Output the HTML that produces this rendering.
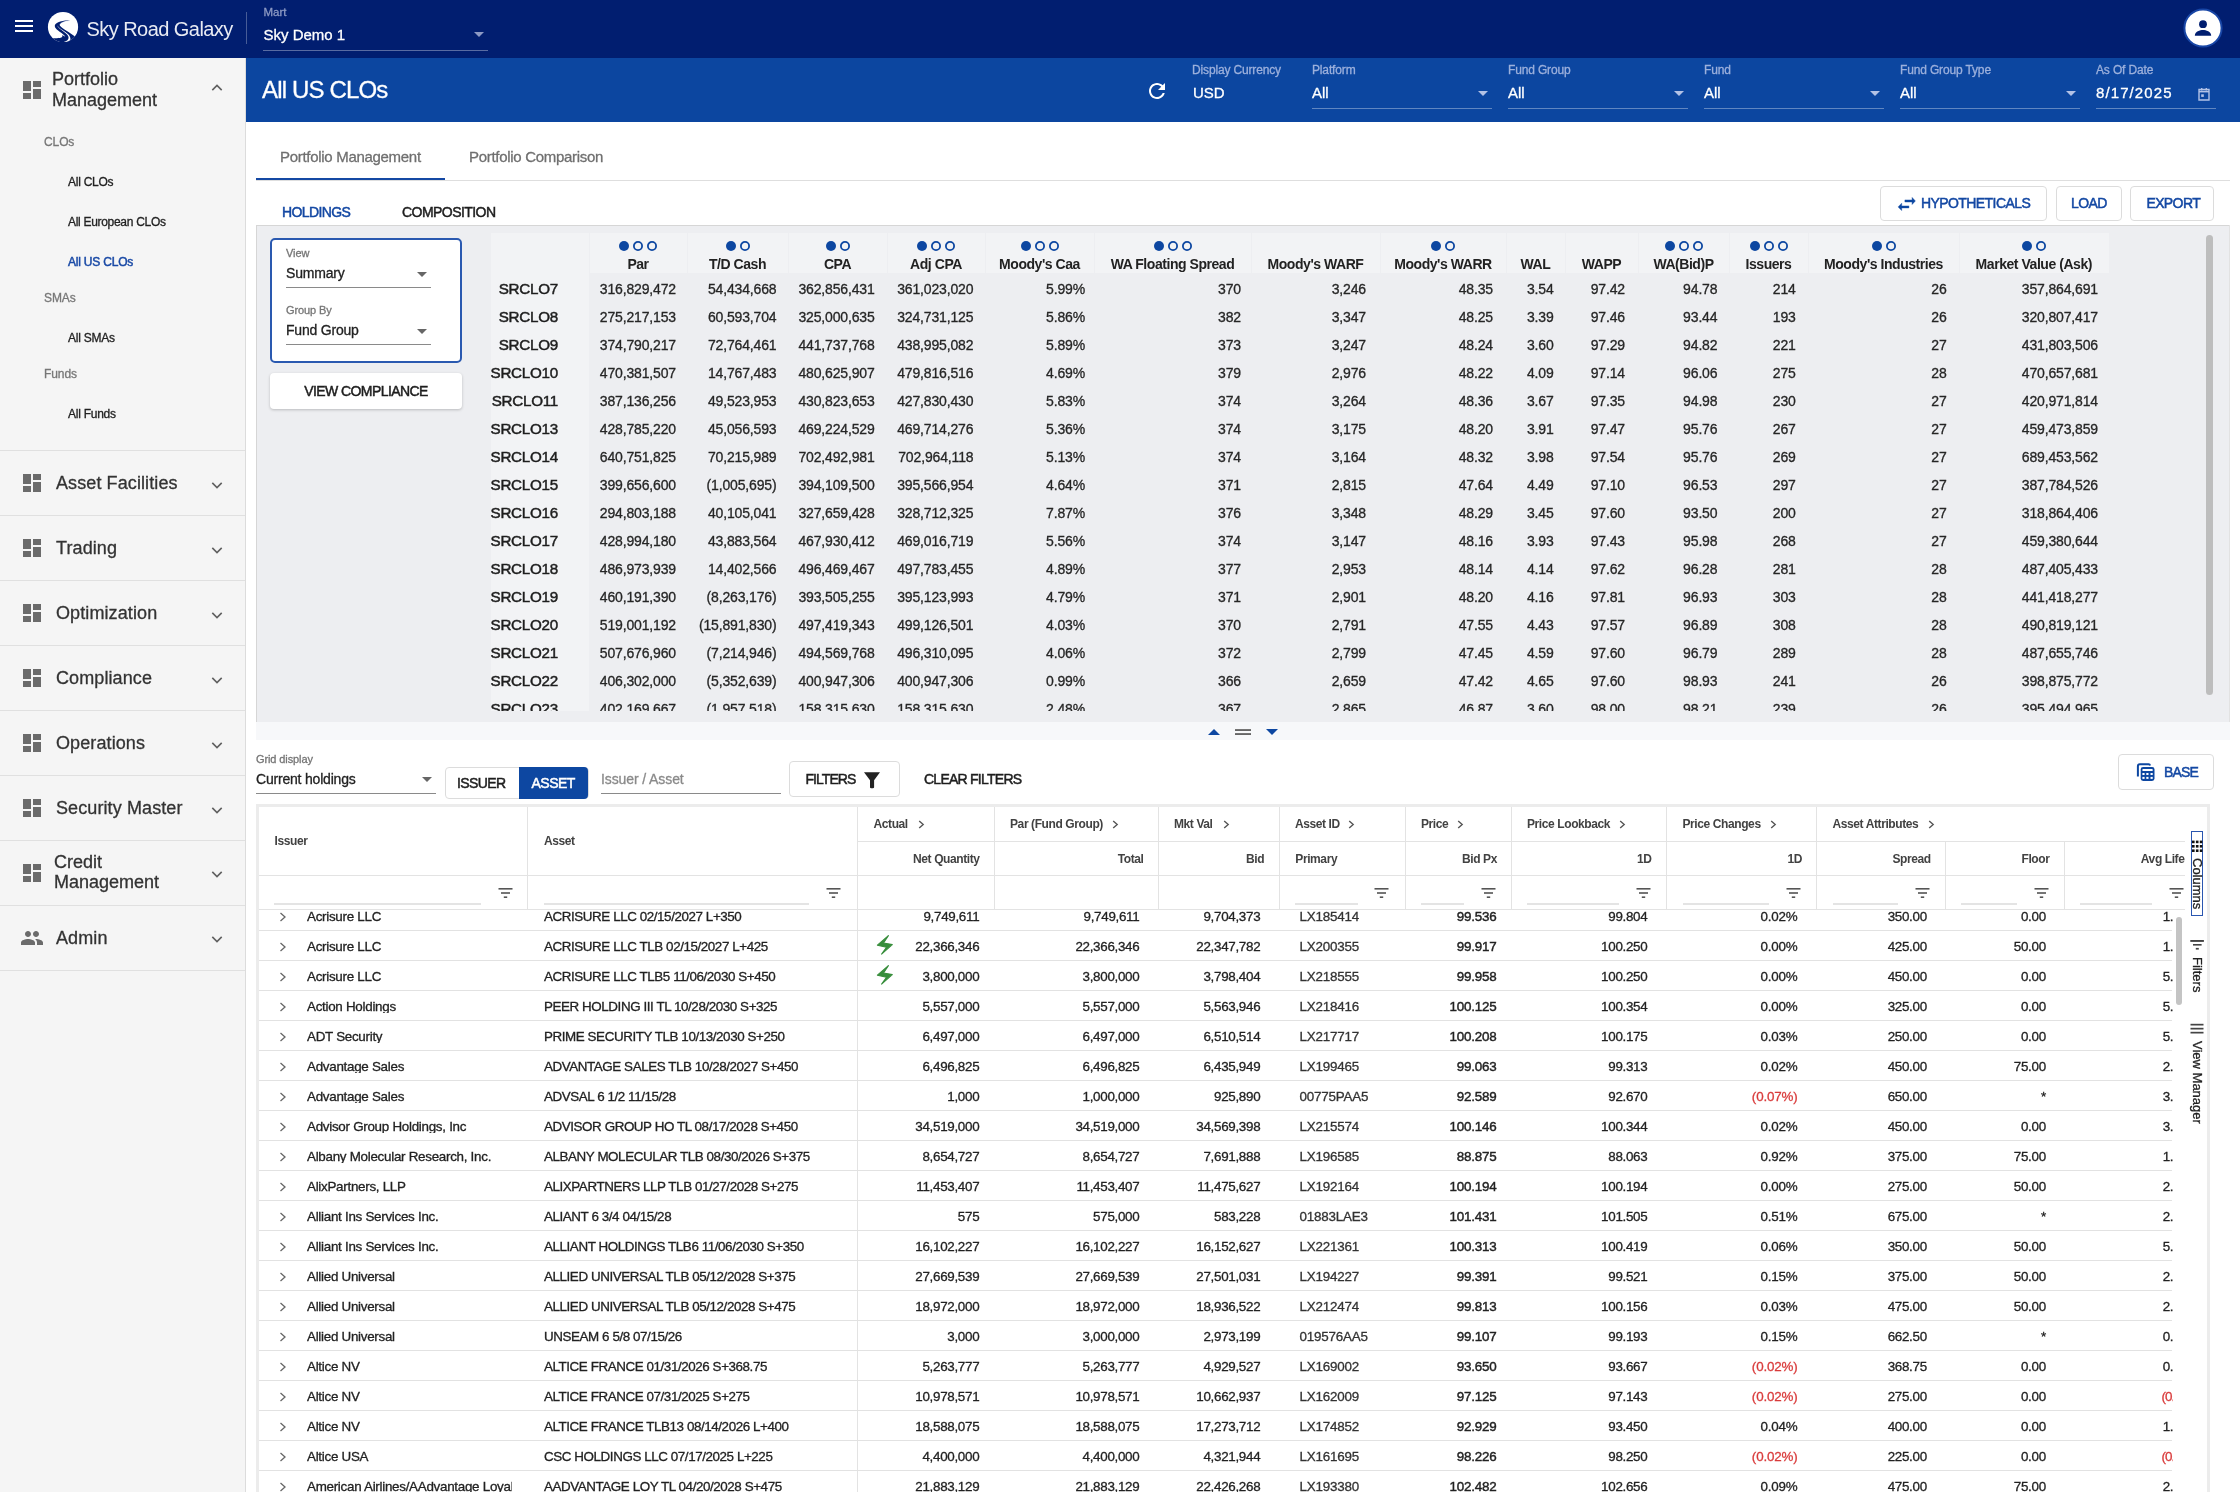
<!DOCTYPE html><html><head><meta charset="utf-8"><title>Sky Road Galaxy</title><style>
html,body{margin:0;padding:0;width:2240px;height:1492px;overflow:hidden;background:#fff;font-family:"Liberation Sans",sans-serif;}
#pg{position:absolute;left:0;top:0;width:2240px;height:1492px;overflow:hidden;will-change:transform;}
.t{position:absolute;white-space:nowrap;line-height:1;-webkit-text-stroke:0.3px currentColor;}
.b{-webkit-text-stroke:0;}
.r{position:absolute;}
.ic{position:absolute;}
.clip{position:absolute;overflow:hidden;}
.md{-webkit-text-stroke:0.48px currentColor;}
.m2{-webkit-text-stroke:0.42px currentColor;}
</style></head><body><div id="pg">
<div class="r" style="left:0px;top:0px;width:2240px;height:58px;background:#011e70;"></div><div class="r" style="left:15px;top:20px;width:18px;height:2px;background:#fff;"></div><div class="r" style="left:15px;top:25px;width:18px;height:2px;background:#fff;"></div><div class="r" style="left:15px;top:30px;width:18px;height:2px;background:#fff;"></div><svg class="ic" style="left:47px;top:11px" width="32" height="32" viewBox="0 0 32 32">
<defs><clipPath id="lc"><circle cx="16" cy="16" r="15.1"/></clipPath></defs>
<g clip-path="url(#lc)">
<rect x="0" y="0" width="32" height="32" fill="#fff"/>
<path d="M0 26.6 C4 27.3 10.5 27.6 13.6 26.8 C15.5 26.2 15.8 25 15 24 L33 33 L0 33 Z" fill="#011e70"/>
<path d="M23 9.2 C17 9.3 8.4 10.8 7.8 14.6 C7.4 17.8 13.5 20.6 17.2 24.2 C19.6 26.6 18 29.6 11.5 31 L20 33 L33 33 L33 24.6 L28 25.6 C22.5 21.2 15.8 18.2 13 14.8 C11.8 12.8 15.5 10.2 23 9.2 Z" fill="#011e70"/>
<path d="M10.4 14.2 C10.6 17.2 17.2 20.2 20.3 23.8 C23.2 27.4 21.3 30.8 13.2 31.6 L20 31.8 C23.8 30.6 24.4 27.2 22 24 C19 20.4 11.6 17.6 10.4 14.2 Z" fill="#fff"/>
<path d="M12.2 13.6 C14 11.2 18 10 22.6 9.6" stroke="#c9d0e6" stroke-width="0.6" fill="none" opacity="0.6"/>
</g></svg><div class="t b" style="top:18.7px;font-size:20px;color:#e8ebf3;letter-spacing:-0.55px;left:86.5px;">Sky Road Galaxy</div><div class="r" style="left:246px;top:12px;width:1px;height:32px;background:rgba(255,255,255,0.28);"></div><div class="t" style="top:7.1px;font-size:11.5px;color:#8d9ac4;left:263.5px;">Mart</div><div class="t" style="top:27.3px;font-size:15px;color:#fff;left:263.5px;">Sky Demo 1</div><div class="r" style="left:263px;top:50px;width:225px;height:1px;background:rgba(255,255,255,0.35);"></div><svg class="ic" style="left:473px;top:31px" width="12" height="7" viewBox="0 0 12 7"><path d="M1 1h10L6 6z" fill="#8d9ac4"/></svg><svg class="ic" style="left:2183px;top:8px" width="40" height="40" viewBox="0 0 40 40">
<circle cx="20" cy="20" r="18.6" fill="#fff" stroke="#1846a6" stroke-width="2"/>
<circle cx="20" cy="16.2" r="3.9" fill="#011e70"/>
<path d="M11.8 27.8 C11.8 23.2 17 21.9 20 21.9 C23 21.9 28.2 23.2 28.2 27.8 Z" fill="#011e70"/>
</svg><div class="r" style="left:0px;top:58px;width:246px;height:1434px;background:#f5f5f5;"></div><div class="r" style="left:245px;top:58px;width:1px;height:1434px;background:#dcdcdc;"></div><svg class="ic" style="left:20px;top:78px" width="24" height="24" viewBox="0 0 24 24"><path d="M3 13h8V3H3v10zm0 8h8v-6H3v6zm10 0h8V11h-8v10zm0-18v6h8V3h-8z" fill="#6b6b6b"/></svg><div class="t" style="top:69.8px;font-size:18px;color:#333;left:52.0px;">Portfolio</div><div class="t" style="top:90.8px;font-size:18px;color:#333;left:52.0px;">Management</div><svg class="ic" style="left:210px;top:82.5px" width="14" height="9" viewBox="0 0 14 9"><path d="M2.3 7.1 L7 2.4 L11.7 7.1" stroke="#606060" stroke-width="1.6" fill="none"/></svg><div class="t" style="top:135.8px;font-size:12px;color:#777;letter-spacing:-0.1px;left:44.0px;">CLOs</div><div class="t" style="top:175.8px;font-size:12px;color:#222;letter-spacing:-0.25px;left:68.0px;">All CLOs</div><div class="t" style="top:215.8px;font-size:12px;color:#222;letter-spacing:-0.3px;left:68.0px;">All European CLOs</div><div class="t md" style="top:255.8px;font-size:12px;color:#1a4aa6;letter-spacing:-0.2px;left:68.0px;">All US CLOs</div><div class="t" style="top:291.8px;font-size:12px;color:#777;letter-spacing:-0.1px;left:44.0px;">SMAs</div><div class="t" style="top:331.8px;font-size:12px;color:#222;letter-spacing:-0.25px;left:68.0px;">All SMAs</div><div class="t" style="top:367.8px;font-size:12px;color:#777;letter-spacing:-0.1px;left:44.0px;">Funds</div><div class="t" style="top:407.8px;font-size:12px;color:#222;letter-spacing:-0.25px;left:68.0px;">All Funds</div><div class="r" style="left:0px;top:450px;width:245px;height:1px;background:#e0e0e0;"></div><svg class="ic" style="left:20px;top:471px" width="24" height="24" viewBox="0 0 24 24"><path d="M3 13h8V3H3v10zm0 8h8v-6H3v6zm10 0h8V11h-8v10zm0-18v6h8V3h-8z" fill="#6b6b6b"/></svg><div class="t" style="top:473.8px;font-size:18px;color:#333;letter-spacing:0.1px;left:56.0px;">Asset Facilities</div><svg class="ic" style="left:210px;top:481px" width="14" height="9" viewBox="0 0 14 9"><path d="M2.3 1.9 L7 6.6 L11.7 1.9" stroke="#606060" stroke-width="1.6" fill="none"/></svg><div class="r" style="left:0px;top:515px;width:245px;height:1px;background:#e0e0e0;"></div><svg class="ic" style="left:20px;top:536px" width="24" height="24" viewBox="0 0 24 24"><path d="M3 13h8V3H3v10zm0 8h8v-6H3v6zm10 0h8V11h-8v10zm0-18v6h8V3h-8z" fill="#6b6b6b"/></svg><div class="t" style="top:538.8px;font-size:18px;color:#333;letter-spacing:0.1px;left:56.0px;">Trading</div><svg class="ic" style="left:210px;top:546px" width="14" height="9" viewBox="0 0 14 9"><path d="M2.3 1.9 L7 6.6 L11.7 1.9" stroke="#606060" stroke-width="1.6" fill="none"/></svg><div class="r" style="left:0px;top:580px;width:245px;height:1px;background:#e0e0e0;"></div><svg class="ic" style="left:20px;top:601px" width="24" height="24" viewBox="0 0 24 24"><path d="M3 13h8V3H3v10zm0 8h8v-6H3v6zm10 0h8V11h-8v10zm0-18v6h8V3h-8z" fill="#6b6b6b"/></svg><div class="t" style="top:603.8px;font-size:18px;color:#333;letter-spacing:0.1px;left:56.0px;">Optimization</div><svg class="ic" style="left:210px;top:611px" width="14" height="9" viewBox="0 0 14 9"><path d="M2.3 1.9 L7 6.6 L11.7 1.9" stroke="#606060" stroke-width="1.6" fill="none"/></svg><div class="r" style="left:0px;top:645px;width:245px;height:1px;background:#e0e0e0;"></div><svg class="ic" style="left:20px;top:666px" width="24" height="24" viewBox="0 0 24 24"><path d="M3 13h8V3H3v10zm0 8h8v-6H3v6zm10 0h8V11h-8v10zm0-18v6h8V3h-8z" fill="#6b6b6b"/></svg><div class="t" style="top:668.8px;font-size:18px;color:#333;letter-spacing:0.1px;left:56.0px;">Compliance</div><svg class="ic" style="left:210px;top:676px" width="14" height="9" viewBox="0 0 14 9"><path d="M2.3 1.9 L7 6.6 L11.7 1.9" stroke="#606060" stroke-width="1.6" fill="none"/></svg><div class="r" style="left:0px;top:710px;width:245px;height:1px;background:#e0e0e0;"></div><svg class="ic" style="left:20px;top:731px" width="24" height="24" viewBox="0 0 24 24"><path d="M3 13h8V3H3v10zm0 8h8v-6H3v6zm10 0h8V11h-8v10zm0-18v6h8V3h-8z" fill="#6b6b6b"/></svg><div class="t" style="top:733.8px;font-size:18px;color:#333;letter-spacing:0.1px;left:56.0px;">Operations</div><svg class="ic" style="left:210px;top:741px" width="14" height="9" viewBox="0 0 14 9"><path d="M2.3 1.9 L7 6.6 L11.7 1.9" stroke="#606060" stroke-width="1.6" fill="none"/></svg><div class="r" style="left:0px;top:775px;width:245px;height:1px;background:#e0e0e0;"></div><svg class="ic" style="left:20px;top:796px" width="24" height="24" viewBox="0 0 24 24"><path d="M3 13h8V3H3v10zm0 8h8v-6H3v6zm10 0h8V11h-8v10zm0-18v6h8V3h-8z" fill="#6b6b6b"/></svg><div class="t" style="top:798.8px;font-size:18px;color:#333;letter-spacing:0.1px;left:56.0px;">Security Master</div><svg class="ic" style="left:210px;top:806px" width="14" height="9" viewBox="0 0 14 9"><path d="M2.3 1.9 L7 6.6 L11.7 1.9" stroke="#606060" stroke-width="1.6" fill="none"/></svg><div class="r" style="left:0px;top:840px;width:245px;height:1px;background:#e0e0e0;"></div><svg class="ic" style="left:20px;top:861px" width="24" height="24" viewBox="0 0 24 24"><path d="M3 13h8V3H3v10zm0 8h8v-6H3v6zm10 0h8V11h-8v10zm0-18v6h8V3h-8z" fill="#6b6b6b"/></svg><div class="t" style="top:853.1px;font-size:18px;color:#333;left:54.0px;">Credit</div><div class="t" style="top:873.2px;font-size:18px;color:#333;left:54.0px;">Management</div><svg class="ic" style="left:210px;top:870px" width="14" height="9" viewBox="0 0 14 9"><path d="M2.3 1.9 L7 6.6 L11.7 1.9" stroke="#606060" stroke-width="1.6" fill="none"/></svg><div class="r" style="left:0px;top:905px;width:245px;height:1px;background:#e0e0e0;"></div><svg class="ic" style="left:20px;top:926px" width="24" height="24" viewBox="0 0 24 24"><path d="M16 11c1.66 0 2.99-1.34 2.99-3S17.66 5 16 5c-1.66 0-3 1.34-3 3s1.34 3 3 3zm-8 0c1.66 0 2.99-1.34 2.99-3S9.66 5 8 5C6.34 5 5 6.34 5 8s1.34 3 3 3zm0 2c-2.33 0-7 1.17-7 3.5V19h14v-2.5c0-2.33-4.67-3.5-7-3.5zm8 0c-.29 0-.62.02-.97.05 1.16.84 1.97 1.97 1.97 3.45V19h6v-2.5c0-2.33-4.67-3.5-7-3.5z" fill="#6b6b6b"/></svg><div class="t" style="top:928.8px;font-size:18px;color:#333;letter-spacing:0.1px;left:56.0px;">Admin</div><svg class="ic" style="left:210px;top:935px" width="14" height="9" viewBox="0 0 14 9"><path d="M2.3 1.9 L7 6.6 L11.7 1.9" stroke="#606060" stroke-width="1.6" fill="none"/></svg><div class="r" style="left:0px;top:970px;width:245px;height:1px;background:#e0e0e0;"></div><div class="r" style="left:246px;top:58px;width:1994px;height:64px;background:#0c46a0;"></div><div class="t" style="top:77.9px;font-size:24px;color:#fff;letter-spacing:-0.85px;left:262.0px;">All US CLOs</div><svg class="ic" style="left:1145px;top:79px" width="24" height="24" viewBox="0 0 24 24"><path d="M17.65 6.35C16.2 4.9 14.21 4 12 4c-4.42 0-7.99 3.58-7.99 8s3.57 8 7.99 8c3.73 0 6.84-2.55 7.73-6h-2.08c-.82 2.33-3.04 4-5.65 4-3.31 0-6-2.69-6-6s2.69-6 6-6c1.66 0 3.14.69 4.22 1.78L13 11h7V4l-2.35 2.35z" fill="#fff"/></svg><div class="t" style="top:64.4px;font-size:12px;color:#9cb0dc;letter-spacing:-0.15px;left:1192.0px;">Display Currency</div><div class="t" style="top:85.3px;font-size:15px;color:#fff;left:1193.0px;">USD</div><div class="t" style="top:64.4px;font-size:12px;color:#9cb0dc;letter-spacing:-0.15px;left:1312.0px;">Platform</div><div class="t" style="top:85.3px;font-size:15px;color:#fff;left:1312.0px;">All</div><div class="r" style="left:1312px;top:108px;width:180px;height:1px;background:rgba(255,255,255,0.35);"></div><svg class="ic" style="left:1477px;top:90px" width="12" height="7" viewBox="0 0 12 7"><path d="M1 1h10L6 6z" fill="#b3c2e6"/></svg><div class="t" style="top:64.4px;font-size:12px;color:#9cb0dc;letter-spacing:-0.15px;left:1508.0px;">Fund Group</div><div class="t" style="top:85.3px;font-size:15px;color:#fff;left:1508.0px;">All</div><div class="r" style="left:1508px;top:108px;width:180px;height:1px;background:rgba(255,255,255,0.35);"></div><svg class="ic" style="left:1673px;top:90px" width="12" height="7" viewBox="0 0 12 7"><path d="M1 1h10L6 6z" fill="#b3c2e6"/></svg><div class="t" style="top:64.4px;font-size:12px;color:#9cb0dc;letter-spacing:-0.15px;left:1704.0px;">Fund</div><div class="t" style="top:85.3px;font-size:15px;color:#fff;left:1704.0px;">All</div><div class="r" style="left:1704px;top:108px;width:180px;height:1px;background:rgba(255,255,255,0.35);"></div><svg class="ic" style="left:1869px;top:90px" width="12" height="7" viewBox="0 0 12 7"><path d="M1 1h10L6 6z" fill="#b3c2e6"/></svg><div class="t" style="top:64.4px;font-size:12px;color:#9cb0dc;letter-spacing:-0.15px;left:1900.0px;">Fund Group Type</div><div class="t" style="top:85.3px;font-size:15px;color:#fff;left:1900.0px;">All</div><div class="r" style="left:1900px;top:108px;width:180px;height:1px;background:rgba(255,255,255,0.35);"></div><svg class="ic" style="left:2065px;top:90px" width="12" height="7" viewBox="0 0 12 7"><path d="M1 1h10L6 6z" fill="#b3c2e6"/></svg><div class="t" style="top:64.4px;font-size:12px;color:#9cb0dc;letter-spacing:-0.15px;left:2096.0px;">As Of Date</div><div class="t" style="top:85.3px;font-size:15px;color:#fff;letter-spacing:1.1px;left:2096.0px;">8/17/2025</div><div class="r" style="left:2096px;top:108px;width:120px;height:1px;background:rgba(255,255,255,0.35);"></div><svg class="ic" style="left:2196px;top:86px" width="16" height="16" viewBox="0 0 16 16"><path d="M3 3.5h10v10.5H3z" fill="none" stroke="#b3c2e6" stroke-width="1.4"/><path d="M3 5.6h10" stroke="#b3c2e6" stroke-width="1.6"/><rect x="5" y="2" width="1.4" height="2.4" fill="#b3c2e6"/><rect x="9.6" y="2" width="1.4" height="2.4" fill="#b3c2e6"/><rect x="5.2" y="8.3" width="2.6" height="2.6" fill="#b3c2e6"/></svg><div class="t" style="top:148.9px;font-size:15px;color:#6f6f6f;letter-spacing:-0.3px;left:280.0px;">Portfolio Management</div><div class="t" style="top:148.9px;font-size:15px;color:#6f6f6f;letter-spacing:-0.3px;left:469.0px;">Portfolio Comparison</div><div class="r" style="left:256px;top:180px;width:1974px;height:1px;background:#dedede;"></div><div class="r" style="left:256px;top:178px;width:189px;height:2px;background:#1448a3;"></div><div class="t md" style="top:205.4px;font-size:14px;color:#1448a3;letter-spacing:-0.6px;left:282.0px;">HOLDINGS</div><div class="t md" style="top:205.4px;font-size:14px;color:#1e1e1e;letter-spacing:-0.55px;left:402.0px;">COMPOSITION</div><div class="r" style="left:1879.5px;top:185.5px;width:165.0px;height:33.0px;border:1px solid #dcdcdc;border-radius:4px;background:#fff;"></div><svg class="ic" style="left:1897px;top:196px" width="20" height="17" viewBox="0 0 20 17"><path d="M7.9 3.9 H15.1 V1.4 L18.4 4.95 L15.1 8.5 V6 H7.9 Z M11.9 9.9 H4.7 V7.2 L1.1 10.9 L4.7 14.6 V11.95 H11.9 Z" fill="#0d47a1" stroke="#0d47a1" stroke-width="0.4" stroke-linejoin="round"/></svg><div class="t md" style="top:196.1px;font-size:14px;color:#1448a3;letter-spacing:-0.58px;left:1921.0px;">HYPOTHETICALS</div><div class="r" style="left:2055.5px;top:185.5px;width:64.0px;height:33.0px;border:1px solid #dcdcdc;border-radius:4px;background:#fff;"></div><div class="t md" style="top:196.1px;font-size:14px;color:#1448a3;letter-spacing:-0.6px;left:2071.0px;">LOAD</div><div class="r" style="left:2130px;top:185.5px;width:81.5px;height:33.0px;border:1px solid #dcdcdc;border-radius:4px;background:#fff;"></div><div class="t md" style="top:196.1px;font-size:14px;color:#1448a3;letter-spacing:-0.6px;left:2146.4px;">EXPORT</div><div class="r" style="left:256px;top:225px;width:1974px;height:497px;background:#edeef1;"></div><div class="r" style="left:256px;top:225px;width:1974px;height:1px;background:#d6d6d6;"></div><div class="r" style="left:256px;top:225px;width:1px;height:497px;background:#d6d6d6;"></div><div class="r" style="left:2229px;top:225px;width:1px;height:497px;background:#e2e2e2;"></div><div class="r" style="left:270px;top:238px;width:188px;height:121px;border:2px solid #2a59b0;border-radius:5px;background:#fff"></div><div class="t" style="top:247.7px;font-size:11px;color:#757575;letter-spacing:-0.1px;left:286.0px;">View</div><div class="t" style="top:266.4px;font-size:14px;color:#222;letter-spacing:-0.2px;left:286.0px;">Summary</div><div class="r" style="left:286px;top:287px;width:145px;height:1px;background:#8a8a8a;"></div><svg class="ic" style="left:416px;top:271px" width="12" height="7" viewBox="0 0 12 7"><path d="M1 1h10L6 6z" fill="#666"/></svg><div class="t" style="top:305.2px;font-size:11px;color:#757575;letter-spacing:-0.1px;left:286.0px;">Group By</div><div class="t" style="top:323.1px;font-size:14px;color:#222;letter-spacing:-0.2px;left:286.0px;">Fund Group</div><div class="r" style="left:286px;top:344px;width:145px;height:1px;background:#8a8a8a;"></div><svg class="ic" style="left:416px;top:327.5px" width="12" height="7" viewBox="0 0 12 7"><path d="M1 1h10L6 6z" fill="#666"/></svg><div class="r" style="left:270px;top:373px;width:192px;height:36px;border-radius:4px;background:#fff;box-shadow:0 1px 3px rgba(0,0,0,0.22)"></div><div class="t md" style="top:384.1px;font-size:14px;color:#1e1e1e;letter-spacing:-0.57px;left:66.0px;width:600px;text-align:center;">VIEW COMPLIANCE</div><div class="r" style="left:491px;top:233px;width:98px;height:40px;background:#f2f3f5;"></div><div class="r" style="left:590px;top:233px;width:97px;height:40px;background:#f2f3f5;"></div><div class="t b" style="top:257.1px;font-size:14px;font-weight:700;color:#222;letter-spacing:-0.45px;left:338.0px;width:600px;text-align:center;">Par</div><svg class="ic" style="left:578.0px;top:240px" width="120" height="12" viewBox="0 0 120 12"><circle cx="46.0" cy="6" r="5" fill="#0d47a1"/><circle cx="60.0" cy="6" r="4.1" fill="none" stroke="#0d47a1" stroke-width="1.8"/><circle cx="74.0" cy="6" r="4.1" fill="none" stroke="#0d47a1" stroke-width="1.8"/></svg><div class="r" style="left:688px;top:233px;width:100px;height:40px;background:#f2f3f5;"></div><div class="t b" style="top:257.1px;font-size:14px;font-weight:700;color:#222;letter-spacing:-0.45px;left:437.5px;width:600px;text-align:center;">T/D Cash</div><svg class="ic" style="left:677.5px;top:240px" width="120" height="12" viewBox="0 0 120 12"><circle cx="53.0" cy="6" r="5" fill="#0d47a1"/><circle cx="67.0" cy="6" r="4.1" fill="none" stroke="#0d47a1" stroke-width="1.8"/></svg><div class="r" style="left:789px;top:233px;width:98px;height:40px;background:#f2f3f5;"></div><div class="t b" style="top:257.1px;font-size:14px;font-weight:700;color:#222;letter-spacing:-0.45px;left:537.5px;width:600px;text-align:center;">CPA</div><svg class="ic" style="left:777.5px;top:240px" width="120" height="12" viewBox="0 0 120 12"><circle cx="53.0" cy="6" r="5" fill="#0d47a1"/><circle cx="67.0" cy="6" r="4.1" fill="none" stroke="#0d47a1" stroke-width="1.8"/></svg><div class="r" style="left:888px;top:233px;width:97px;height:40px;background:#f2f3f5;"></div><div class="t b" style="top:257.1px;font-size:14px;font-weight:700;color:#222;letter-spacing:-0.45px;left:636.0px;width:600px;text-align:center;">Adj CPA</div><svg class="ic" style="left:876.0px;top:240px" width="120" height="12" viewBox="0 0 120 12"><circle cx="46.0" cy="6" r="5" fill="#0d47a1"/><circle cx="60.0" cy="6" r="4.1" fill="none" stroke="#0d47a1" stroke-width="1.8"/><circle cx="74.0" cy="6" r="4.1" fill="none" stroke="#0d47a1" stroke-width="1.8"/></svg><div class="r" style="left:986px;top:233px;width:108px;height:40px;background:#f2f3f5;"></div><div class="t b" style="top:257.1px;font-size:14px;font-weight:700;color:#222;letter-spacing:-0.45px;left:739.5px;width:600px;text-align:center;">Moody's Caa</div><svg class="ic" style="left:979.5px;top:240px" width="120" height="12" viewBox="0 0 120 12"><circle cx="46.0" cy="6" r="5" fill="#0d47a1"/><circle cx="60.0" cy="6" r="4.1" fill="none" stroke="#0d47a1" stroke-width="1.8"/><circle cx="74.0" cy="6" r="4.1" fill="none" stroke="#0d47a1" stroke-width="1.8"/></svg><div class="r" style="left:1095px;top:233px;width:156px;height:40px;background:#f2f3f5;"></div><div class="t b" style="top:257.1px;font-size:14px;font-weight:700;color:#222;letter-spacing:-0.45px;left:872.5px;width:600px;text-align:center;">WA Floating Spread</div><svg class="ic" style="left:1112.5px;top:240px" width="120" height="12" viewBox="0 0 120 12"><circle cx="46.0" cy="6" r="5" fill="#0d47a1"/><circle cx="60.0" cy="6" r="4.1" fill="none" stroke="#0d47a1" stroke-width="1.8"/><circle cx="74.0" cy="6" r="4.1" fill="none" stroke="#0d47a1" stroke-width="1.8"/></svg><div class="r" style="left:1252px;top:233px;width:128px;height:40px;background:#f2f3f5;"></div><div class="t b" style="top:257.1px;font-size:14px;font-weight:700;color:#222;letter-spacing:-0.45px;left:1015.5px;width:600px;text-align:center;">Moody's WARF</div><div class="r" style="left:1381px;top:233px;width:125px;height:40px;background:#f2f3f5;"></div><div class="t b" style="top:257.1px;font-size:14px;font-weight:700;color:#222;letter-spacing:-0.45px;left:1143.0px;width:600px;text-align:center;">Moody's WARR</div><svg class="ic" style="left:1383.0px;top:240px" width="120" height="12" viewBox="0 0 120 12"><circle cx="53.0" cy="6" r="5" fill="#0d47a1"/><circle cx="67.0" cy="6" r="4.1" fill="none" stroke="#0d47a1" stroke-width="1.8"/></svg><div class="r" style="left:1507px;top:233px;width:58px;height:40px;background:#f2f3f5;"></div><div class="t b" style="top:257.1px;font-size:14px;font-weight:700;color:#222;letter-spacing:-0.45px;left:1235.5px;width:600px;text-align:center;">WAL</div><div class="r" style="left:1566px;top:233px;width:72px;height:40px;background:#f2f3f5;"></div><div class="t b" style="top:257.1px;font-size:14px;font-weight:700;color:#222;letter-spacing:-0.45px;left:1301.5px;width:600px;text-align:center;">WAPP</div><div class="r" style="left:1639px;top:233px;width:90px;height:40px;background:#f2f3f5;"></div><div class="t b" style="top:257.1px;font-size:14px;font-weight:700;color:#222;letter-spacing:-0.45px;left:1383.5px;width:600px;text-align:center;">WA(Bid)P</div><svg class="ic" style="left:1623.5px;top:240px" width="120" height="12" viewBox="0 0 120 12"><circle cx="46.0" cy="6" r="5" fill="#0d47a1"/><circle cx="60.0" cy="6" r="4.1" fill="none" stroke="#0d47a1" stroke-width="1.8"/><circle cx="74.0" cy="6" r="4.1" fill="none" stroke="#0d47a1" stroke-width="1.8"/></svg><div class="r" style="left:1730px;top:233px;width:78px;height:40px;background:#f2f3f5;"></div><div class="t b" style="top:257.1px;font-size:14px;font-weight:700;color:#222;letter-spacing:-0.45px;left:1468.5px;width:600px;text-align:center;">Issuers</div><svg class="ic" style="left:1708.5px;top:240px" width="120" height="12" viewBox="0 0 120 12"><circle cx="46.0" cy="6" r="5" fill="#0d47a1"/><circle cx="60.0" cy="6" r="4.1" fill="none" stroke="#0d47a1" stroke-width="1.8"/><circle cx="74.0" cy="6" r="4.1" fill="none" stroke="#0d47a1" stroke-width="1.8"/></svg><div class="r" style="left:1809px;top:233px;width:150px;height:40px;background:#f2f3f5;"></div><div class="t b" style="top:257.1px;font-size:14px;font-weight:700;color:#222;letter-spacing:-0.45px;left:1583.5px;width:600px;text-align:center;">Moody's Industries</div><svg class="ic" style="left:1823.5px;top:240px" width="120" height="12" viewBox="0 0 120 12"><circle cx="53.0" cy="6" r="5" fill="#0d47a1"/><circle cx="67.0" cy="6" r="4.1" fill="none" stroke="#0d47a1" stroke-width="1.8"/></svg><div class="r" style="left:1960px;top:233px;width:148.5px;height:40px;background:#f2f3f5;"></div><div class="t b" style="top:257.1px;font-size:14px;font-weight:700;color:#222;letter-spacing:-0.45px;left:1733.8px;width:600px;text-align:center;">Market Value (Ask)</div><svg class="ic" style="left:1973.8px;top:240px" width="120" height="12" viewBox="0 0 120 12"><circle cx="53.0" cy="6" r="5" fill="#0d47a1"/><circle cx="67.0" cy="6" r="4.1" fill="none" stroke="#0d47a1" stroke-width="1.8"/></svg><div class="r" style="left:491px;top:273px;width:98px;height:438px;background:#f2f3f5;"></div><div class="clip" style="left:256px;top:273px;width:1974px;height:438px"><div class="t md" style="top:8.1px;font-size:15.2px;color:#1e1e1e;letter-spacing:-0.25px;right:1672.0px;">SRCLO7</div><div class="t" style="top:9.1px;font-size:14px;color:#262626;letter-spacing:-0.15px;right:1554.0px;">316,829,472</div><div class="t" style="top:9.1px;font-size:14px;color:#262626;letter-spacing:-0.15px;right:1453.5px;">54,434,668</div><div class="t" style="top:9.1px;font-size:14px;color:#262626;letter-spacing:-0.15px;right:1355.4px;">362,856,431</div><div class="t" style="top:9.1px;font-size:14px;color:#262626;letter-spacing:-0.15px;right:1256.6px;">361,023,020</div><div class="t" style="top:9.1px;font-size:14px;color:#262626;letter-spacing:-0.15px;right:1145.0px;">5.99%</div><div class="t" style="top:9.1px;font-size:14px;color:#262626;letter-spacing:-0.15px;right:989.0px;">370</div><div class="t" style="top:9.1px;font-size:14px;color:#262626;letter-spacing:-0.15px;right:864.0px;">3,246</div><div class="t" style="top:9.1px;font-size:14px;color:#262626;letter-spacing:-0.15px;right:737.0px;">48.35</div><div class="t" style="top:9.1px;font-size:14px;color:#262626;letter-spacing:-0.15px;right:676.4px;">3.54</div><div class="t" style="top:9.1px;font-size:14px;color:#262626;letter-spacing:-0.15px;right:605.0px;">97.42</div><div class="t" style="top:9.1px;font-size:14px;color:#262626;letter-spacing:-0.15px;right:512.6px;">94.78</div><div class="t" style="top:9.1px;font-size:14px;color:#262626;letter-spacing:-0.15px;right:434.3px;">214</div><div class="t" style="top:9.1px;font-size:14px;color:#262626;letter-spacing:-0.15px;right:283.4px;">26</div><div class="t" style="top:9.1px;font-size:14px;color:#262626;letter-spacing:-0.15px;right:132.0px;">357,864,691</div><div class="t md" style="top:36.1px;font-size:15.2px;color:#1e1e1e;letter-spacing:-0.25px;right:1672.0px;">SRCLO8</div><div class="t" style="top:37.1px;font-size:14px;color:#262626;letter-spacing:-0.15px;right:1554.0px;">275,217,153</div><div class="t" style="top:37.1px;font-size:14px;color:#262626;letter-spacing:-0.15px;right:1453.5px;">60,593,704</div><div class="t" style="top:37.1px;font-size:14px;color:#262626;letter-spacing:-0.15px;right:1355.4px;">325,000,635</div><div class="t" style="top:37.1px;font-size:14px;color:#262626;letter-spacing:-0.15px;right:1256.6px;">324,731,125</div><div class="t" style="top:37.1px;font-size:14px;color:#262626;letter-spacing:-0.15px;right:1145.0px;">5.86%</div><div class="t" style="top:37.1px;font-size:14px;color:#262626;letter-spacing:-0.15px;right:989.0px;">382</div><div class="t" style="top:37.1px;font-size:14px;color:#262626;letter-spacing:-0.15px;right:864.0px;">3,347</div><div class="t" style="top:37.1px;font-size:14px;color:#262626;letter-spacing:-0.15px;right:737.0px;">48.25</div><div class="t" style="top:37.1px;font-size:14px;color:#262626;letter-spacing:-0.15px;right:676.4px;">3.39</div><div class="t" style="top:37.1px;font-size:14px;color:#262626;letter-spacing:-0.15px;right:605.0px;">97.46</div><div class="t" style="top:37.1px;font-size:14px;color:#262626;letter-spacing:-0.15px;right:512.6px;">93.44</div><div class="t" style="top:37.1px;font-size:14px;color:#262626;letter-spacing:-0.15px;right:434.3px;">193</div><div class="t" style="top:37.1px;font-size:14px;color:#262626;letter-spacing:-0.15px;right:283.4px;">26</div><div class="t" style="top:37.1px;font-size:14px;color:#262626;letter-spacing:-0.15px;right:132.0px;">320,807,417</div><div class="t md" style="top:64.1px;font-size:15.2px;color:#1e1e1e;letter-spacing:-0.25px;right:1672.0px;">SRCLO9</div><div class="t" style="top:65.1px;font-size:14px;color:#262626;letter-spacing:-0.15px;right:1554.0px;">374,790,217</div><div class="t" style="top:65.1px;font-size:14px;color:#262626;letter-spacing:-0.15px;right:1453.5px;">72,764,461</div><div class="t" style="top:65.1px;font-size:14px;color:#262626;letter-spacing:-0.15px;right:1355.4px;">441,737,768</div><div class="t" style="top:65.1px;font-size:14px;color:#262626;letter-spacing:-0.15px;right:1256.6px;">438,995,082</div><div class="t" style="top:65.1px;font-size:14px;color:#262626;letter-spacing:-0.15px;right:1145.0px;">5.89%</div><div class="t" style="top:65.1px;font-size:14px;color:#262626;letter-spacing:-0.15px;right:989.0px;">373</div><div class="t" style="top:65.1px;font-size:14px;color:#262626;letter-spacing:-0.15px;right:864.0px;">3,247</div><div class="t" style="top:65.1px;font-size:14px;color:#262626;letter-spacing:-0.15px;right:737.0px;">48.24</div><div class="t" style="top:65.1px;font-size:14px;color:#262626;letter-spacing:-0.15px;right:676.4px;">3.60</div><div class="t" style="top:65.1px;font-size:14px;color:#262626;letter-spacing:-0.15px;right:605.0px;">97.29</div><div class="t" style="top:65.1px;font-size:14px;color:#262626;letter-spacing:-0.15px;right:512.6px;">94.82</div><div class="t" style="top:65.1px;font-size:14px;color:#262626;letter-spacing:-0.15px;right:434.3px;">221</div><div class="t" style="top:65.1px;font-size:14px;color:#262626;letter-spacing:-0.15px;right:283.4px;">27</div><div class="t" style="top:65.1px;font-size:14px;color:#262626;letter-spacing:-0.15px;right:132.0px;">431,803,506</div><div class="t md" style="top:92.1px;font-size:15.2px;color:#1e1e1e;letter-spacing:-0.25px;right:1672.0px;">SRCLO10</div><div class="t" style="top:93.1px;font-size:14px;color:#262626;letter-spacing:-0.15px;right:1554.0px;">470,381,507</div><div class="t" style="top:93.1px;font-size:14px;color:#262626;letter-spacing:-0.15px;right:1453.5px;">14,767,483</div><div class="t" style="top:93.1px;font-size:14px;color:#262626;letter-spacing:-0.15px;right:1355.4px;">480,625,907</div><div class="t" style="top:93.1px;font-size:14px;color:#262626;letter-spacing:-0.15px;right:1256.6px;">479,816,516</div><div class="t" style="top:93.1px;font-size:14px;color:#262626;letter-spacing:-0.15px;right:1145.0px;">4.69%</div><div class="t" style="top:93.1px;font-size:14px;color:#262626;letter-spacing:-0.15px;right:989.0px;">379</div><div class="t" style="top:93.1px;font-size:14px;color:#262626;letter-spacing:-0.15px;right:864.0px;">2,976</div><div class="t" style="top:93.1px;font-size:14px;color:#262626;letter-spacing:-0.15px;right:737.0px;">48.22</div><div class="t" style="top:93.1px;font-size:14px;color:#262626;letter-spacing:-0.15px;right:676.4px;">4.09</div><div class="t" style="top:93.1px;font-size:14px;color:#262626;letter-spacing:-0.15px;right:605.0px;">97.14</div><div class="t" style="top:93.1px;font-size:14px;color:#262626;letter-spacing:-0.15px;right:512.6px;">96.06</div><div class="t" style="top:93.1px;font-size:14px;color:#262626;letter-spacing:-0.15px;right:434.3px;">275</div><div class="t" style="top:93.1px;font-size:14px;color:#262626;letter-spacing:-0.15px;right:283.4px;">28</div><div class="t" style="top:93.1px;font-size:14px;color:#262626;letter-spacing:-0.15px;right:132.0px;">470,657,681</div><div class="t md" style="top:120.1px;font-size:15.2px;color:#1e1e1e;letter-spacing:-0.25px;right:1672.0px;">SRCLO11</div><div class="t" style="top:121.1px;font-size:14px;color:#262626;letter-spacing:-0.15px;right:1554.0px;">387,136,256</div><div class="t" style="top:121.1px;font-size:14px;color:#262626;letter-spacing:-0.15px;right:1453.5px;">49,523,953</div><div class="t" style="top:121.1px;font-size:14px;color:#262626;letter-spacing:-0.15px;right:1355.4px;">430,823,653</div><div class="t" style="top:121.1px;font-size:14px;color:#262626;letter-spacing:-0.15px;right:1256.6px;">427,830,430</div><div class="t" style="top:121.1px;font-size:14px;color:#262626;letter-spacing:-0.15px;right:1145.0px;">5.83%</div><div class="t" style="top:121.1px;font-size:14px;color:#262626;letter-spacing:-0.15px;right:989.0px;">374</div><div class="t" style="top:121.1px;font-size:14px;color:#262626;letter-spacing:-0.15px;right:864.0px;">3,264</div><div class="t" style="top:121.1px;font-size:14px;color:#262626;letter-spacing:-0.15px;right:737.0px;">48.36</div><div class="t" style="top:121.1px;font-size:14px;color:#262626;letter-spacing:-0.15px;right:676.4px;">3.67</div><div class="t" style="top:121.1px;font-size:14px;color:#262626;letter-spacing:-0.15px;right:605.0px;">97.35</div><div class="t" style="top:121.1px;font-size:14px;color:#262626;letter-spacing:-0.15px;right:512.6px;">94.98</div><div class="t" style="top:121.1px;font-size:14px;color:#262626;letter-spacing:-0.15px;right:434.3px;">230</div><div class="t" style="top:121.1px;font-size:14px;color:#262626;letter-spacing:-0.15px;right:283.4px;">27</div><div class="t" style="top:121.1px;font-size:14px;color:#262626;letter-spacing:-0.15px;right:132.0px;">420,971,814</div><div class="t md" style="top:148.1px;font-size:15.2px;color:#1e1e1e;letter-spacing:-0.25px;right:1672.0px;">SRCLO13</div><div class="t" style="top:149.1px;font-size:14px;color:#262626;letter-spacing:-0.15px;right:1554.0px;">428,785,220</div><div class="t" style="top:149.1px;font-size:14px;color:#262626;letter-spacing:-0.15px;right:1453.5px;">45,056,593</div><div class="t" style="top:149.1px;font-size:14px;color:#262626;letter-spacing:-0.15px;right:1355.4px;">469,224,529</div><div class="t" style="top:149.1px;font-size:14px;color:#262626;letter-spacing:-0.15px;right:1256.6px;">469,714,276</div><div class="t" style="top:149.1px;font-size:14px;color:#262626;letter-spacing:-0.15px;right:1145.0px;">5.36%</div><div class="t" style="top:149.1px;font-size:14px;color:#262626;letter-spacing:-0.15px;right:989.0px;">374</div><div class="t" style="top:149.1px;font-size:14px;color:#262626;letter-spacing:-0.15px;right:864.0px;">3,175</div><div class="t" style="top:149.1px;font-size:14px;color:#262626;letter-spacing:-0.15px;right:737.0px;">48.20</div><div class="t" style="top:149.1px;font-size:14px;color:#262626;letter-spacing:-0.15px;right:676.4px;">3.91</div><div class="t" style="top:149.1px;font-size:14px;color:#262626;letter-spacing:-0.15px;right:605.0px;">97.47</div><div class="t" style="top:149.1px;font-size:14px;color:#262626;letter-spacing:-0.15px;right:512.6px;">95.76</div><div class="t" style="top:149.1px;font-size:14px;color:#262626;letter-spacing:-0.15px;right:434.3px;">267</div><div class="t" style="top:149.1px;font-size:14px;color:#262626;letter-spacing:-0.15px;right:283.4px;">27</div><div class="t" style="top:149.1px;font-size:14px;color:#262626;letter-spacing:-0.15px;right:132.0px;">459,473,859</div><div class="t md" style="top:176.1px;font-size:15.2px;color:#1e1e1e;letter-spacing:-0.25px;right:1672.0px;">SRCLO14</div><div class="t" style="top:177.1px;font-size:14px;color:#262626;letter-spacing:-0.15px;right:1554.0px;">640,751,825</div><div class="t" style="top:177.1px;font-size:14px;color:#262626;letter-spacing:-0.15px;right:1453.5px;">70,215,989</div><div class="t" style="top:177.1px;font-size:14px;color:#262626;letter-spacing:-0.15px;right:1355.4px;">702,492,981</div><div class="t" style="top:177.1px;font-size:14px;color:#262626;letter-spacing:-0.15px;right:1256.6px;">702,964,118</div><div class="t" style="top:177.1px;font-size:14px;color:#262626;letter-spacing:-0.15px;right:1145.0px;">5.13%</div><div class="t" style="top:177.1px;font-size:14px;color:#262626;letter-spacing:-0.15px;right:989.0px;">374</div><div class="t" style="top:177.1px;font-size:14px;color:#262626;letter-spacing:-0.15px;right:864.0px;">3,164</div><div class="t" style="top:177.1px;font-size:14px;color:#262626;letter-spacing:-0.15px;right:737.0px;">48.32</div><div class="t" style="top:177.1px;font-size:14px;color:#262626;letter-spacing:-0.15px;right:676.4px;">3.98</div><div class="t" style="top:177.1px;font-size:14px;color:#262626;letter-spacing:-0.15px;right:605.0px;">97.54</div><div class="t" style="top:177.1px;font-size:14px;color:#262626;letter-spacing:-0.15px;right:512.6px;">95.76</div><div class="t" style="top:177.1px;font-size:14px;color:#262626;letter-spacing:-0.15px;right:434.3px;">269</div><div class="t" style="top:177.1px;font-size:14px;color:#262626;letter-spacing:-0.15px;right:283.4px;">27</div><div class="t" style="top:177.1px;font-size:14px;color:#262626;letter-spacing:-0.15px;right:132.0px;">689,453,562</div><div class="t md" style="top:204.1px;font-size:15.2px;color:#1e1e1e;letter-spacing:-0.25px;right:1672.0px;">SRCLO15</div><div class="t" style="top:205.1px;font-size:14px;color:#262626;letter-spacing:-0.15px;right:1554.0px;">399,656,600</div><div class="t" style="top:205.1px;font-size:14px;color:#262626;letter-spacing:-0.15px;right:1453.5px;">(1,005,695)</div><div class="t" style="top:205.1px;font-size:14px;color:#262626;letter-spacing:-0.15px;right:1355.4px;">394,109,500</div><div class="t" style="top:205.1px;font-size:14px;color:#262626;letter-spacing:-0.15px;right:1256.6px;">395,566,954</div><div class="t" style="top:205.1px;font-size:14px;color:#262626;letter-spacing:-0.15px;right:1145.0px;">4.64%</div><div class="t" style="top:205.1px;font-size:14px;color:#262626;letter-spacing:-0.15px;right:989.0px;">371</div><div class="t" style="top:205.1px;font-size:14px;color:#262626;letter-spacing:-0.15px;right:864.0px;">2,815</div><div class="t" style="top:205.1px;font-size:14px;color:#262626;letter-spacing:-0.15px;right:737.0px;">47.64</div><div class="t" style="top:205.1px;font-size:14px;color:#262626;letter-spacing:-0.15px;right:676.4px;">4.49</div><div class="t" style="top:205.1px;font-size:14px;color:#262626;letter-spacing:-0.15px;right:605.0px;">97.10</div><div class="t" style="top:205.1px;font-size:14px;color:#262626;letter-spacing:-0.15px;right:512.6px;">96.53</div><div class="t" style="top:205.1px;font-size:14px;color:#262626;letter-spacing:-0.15px;right:434.3px;">297</div><div class="t" style="top:205.1px;font-size:14px;color:#262626;letter-spacing:-0.15px;right:283.4px;">27</div><div class="t" style="top:205.1px;font-size:14px;color:#262626;letter-spacing:-0.15px;right:132.0px;">387,784,526</div><div class="t md" style="top:232.1px;font-size:15.2px;color:#1e1e1e;letter-spacing:-0.25px;right:1672.0px;">SRCLO16</div><div class="t" style="top:233.1px;font-size:14px;color:#262626;letter-spacing:-0.15px;right:1554.0px;">294,803,188</div><div class="t" style="top:233.1px;font-size:14px;color:#262626;letter-spacing:-0.15px;right:1453.5px;">40,105,041</div><div class="t" style="top:233.1px;font-size:14px;color:#262626;letter-spacing:-0.15px;right:1355.4px;">327,659,428</div><div class="t" style="top:233.1px;font-size:14px;color:#262626;letter-spacing:-0.15px;right:1256.6px;">328,712,325</div><div class="t" style="top:233.1px;font-size:14px;color:#262626;letter-spacing:-0.15px;right:1145.0px;">7.87%</div><div class="t" style="top:233.1px;font-size:14px;color:#262626;letter-spacing:-0.15px;right:989.0px;">376</div><div class="t" style="top:233.1px;font-size:14px;color:#262626;letter-spacing:-0.15px;right:864.0px;">3,348</div><div class="t" style="top:233.1px;font-size:14px;color:#262626;letter-spacing:-0.15px;right:737.0px;">48.29</div><div class="t" style="top:233.1px;font-size:14px;color:#262626;letter-spacing:-0.15px;right:676.4px;">3.45</div><div class="t" style="top:233.1px;font-size:14px;color:#262626;letter-spacing:-0.15px;right:605.0px;">97.60</div><div class="t" style="top:233.1px;font-size:14px;color:#262626;letter-spacing:-0.15px;right:512.6px;">93.50</div><div class="t" style="top:233.1px;font-size:14px;color:#262626;letter-spacing:-0.15px;right:434.3px;">200</div><div class="t" style="top:233.1px;font-size:14px;color:#262626;letter-spacing:-0.15px;right:283.4px;">27</div><div class="t" style="top:233.1px;font-size:14px;color:#262626;letter-spacing:-0.15px;right:132.0px;">318,864,406</div><div class="t md" style="top:260.1px;font-size:15.2px;color:#1e1e1e;letter-spacing:-0.25px;right:1672.0px;">SRCLO17</div><div class="t" style="top:261.1px;font-size:14px;color:#262626;letter-spacing:-0.15px;right:1554.0px;">428,994,180</div><div class="t" style="top:261.1px;font-size:14px;color:#262626;letter-spacing:-0.15px;right:1453.5px;">43,883,564</div><div class="t" style="top:261.1px;font-size:14px;color:#262626;letter-spacing:-0.15px;right:1355.4px;">467,930,412</div><div class="t" style="top:261.1px;font-size:14px;color:#262626;letter-spacing:-0.15px;right:1256.6px;">469,016,719</div><div class="t" style="top:261.1px;font-size:14px;color:#262626;letter-spacing:-0.15px;right:1145.0px;">5.56%</div><div class="t" style="top:261.1px;font-size:14px;color:#262626;letter-spacing:-0.15px;right:989.0px;">374</div><div class="t" style="top:261.1px;font-size:14px;color:#262626;letter-spacing:-0.15px;right:864.0px;">3,147</div><div class="t" style="top:261.1px;font-size:14px;color:#262626;letter-spacing:-0.15px;right:737.0px;">48.16</div><div class="t" style="top:261.1px;font-size:14px;color:#262626;letter-spacing:-0.15px;right:676.4px;">3.93</div><div class="t" style="top:261.1px;font-size:14px;color:#262626;letter-spacing:-0.15px;right:605.0px;">97.43</div><div class="t" style="top:261.1px;font-size:14px;color:#262626;letter-spacing:-0.15px;right:512.6px;">95.98</div><div class="t" style="top:261.1px;font-size:14px;color:#262626;letter-spacing:-0.15px;right:434.3px;">268</div><div class="t" style="top:261.1px;font-size:14px;color:#262626;letter-spacing:-0.15px;right:283.4px;">27</div><div class="t" style="top:261.1px;font-size:14px;color:#262626;letter-spacing:-0.15px;right:132.0px;">459,380,644</div><div class="t md" style="top:288.1px;font-size:15.2px;color:#1e1e1e;letter-spacing:-0.25px;right:1672.0px;">SRCLO18</div><div class="t" style="top:289.1px;font-size:14px;color:#262626;letter-spacing:-0.15px;right:1554.0px;">486,973,939</div><div class="t" style="top:289.1px;font-size:14px;color:#262626;letter-spacing:-0.15px;right:1453.5px;">14,402,566</div><div class="t" style="top:289.1px;font-size:14px;color:#262626;letter-spacing:-0.15px;right:1355.4px;">496,469,467</div><div class="t" style="top:289.1px;font-size:14px;color:#262626;letter-spacing:-0.15px;right:1256.6px;">497,783,455</div><div class="t" style="top:289.1px;font-size:14px;color:#262626;letter-spacing:-0.15px;right:1145.0px;">4.89%</div><div class="t" style="top:289.1px;font-size:14px;color:#262626;letter-spacing:-0.15px;right:989.0px;">377</div><div class="t" style="top:289.1px;font-size:14px;color:#262626;letter-spacing:-0.15px;right:864.0px;">2,953</div><div class="t" style="top:289.1px;font-size:14px;color:#262626;letter-spacing:-0.15px;right:737.0px;">48.14</div><div class="t" style="top:289.1px;font-size:14px;color:#262626;letter-spacing:-0.15px;right:676.4px;">4.14</div><div class="t" style="top:289.1px;font-size:14px;color:#262626;letter-spacing:-0.15px;right:605.0px;">97.62</div><div class="t" style="top:289.1px;font-size:14px;color:#262626;letter-spacing:-0.15px;right:512.6px;">96.28</div><div class="t" style="top:289.1px;font-size:14px;color:#262626;letter-spacing:-0.15px;right:434.3px;">281</div><div class="t" style="top:289.1px;font-size:14px;color:#262626;letter-spacing:-0.15px;right:283.4px;">28</div><div class="t" style="top:289.1px;font-size:14px;color:#262626;letter-spacing:-0.15px;right:132.0px;">487,405,433</div><div class="t md" style="top:316.1px;font-size:15.2px;color:#1e1e1e;letter-spacing:-0.25px;right:1672.0px;">SRCLO19</div><div class="t" style="top:317.1px;font-size:14px;color:#262626;letter-spacing:-0.15px;right:1554.0px;">460,191,390</div><div class="t" style="top:317.1px;font-size:14px;color:#262626;letter-spacing:-0.15px;right:1453.5px;">(8,263,176)</div><div class="t" style="top:317.1px;font-size:14px;color:#262626;letter-spacing:-0.15px;right:1355.4px;">393,505,255</div><div class="t" style="top:317.1px;font-size:14px;color:#262626;letter-spacing:-0.15px;right:1256.6px;">395,123,993</div><div class="t" style="top:317.1px;font-size:14px;color:#262626;letter-spacing:-0.15px;right:1145.0px;">4.79%</div><div class="t" style="top:317.1px;font-size:14px;color:#262626;letter-spacing:-0.15px;right:989.0px;">371</div><div class="t" style="top:317.1px;font-size:14px;color:#262626;letter-spacing:-0.15px;right:864.0px;">2,901</div><div class="t" style="top:317.1px;font-size:14px;color:#262626;letter-spacing:-0.15px;right:737.0px;">48.20</div><div class="t" style="top:317.1px;font-size:14px;color:#262626;letter-spacing:-0.15px;right:676.4px;">4.16</div><div class="t" style="top:317.1px;font-size:14px;color:#262626;letter-spacing:-0.15px;right:605.0px;">97.81</div><div class="t" style="top:317.1px;font-size:14px;color:#262626;letter-spacing:-0.15px;right:512.6px;">96.93</div><div class="t" style="top:317.1px;font-size:14px;color:#262626;letter-spacing:-0.15px;right:434.3px;">303</div><div class="t" style="top:317.1px;font-size:14px;color:#262626;letter-spacing:-0.15px;right:283.4px;">28</div><div class="t" style="top:317.1px;font-size:14px;color:#262626;letter-spacing:-0.15px;right:132.0px;">441,418,277</div><div class="t md" style="top:344.1px;font-size:15.2px;color:#1e1e1e;letter-spacing:-0.25px;right:1672.0px;">SRCLO20</div><div class="t" style="top:345.1px;font-size:14px;color:#262626;letter-spacing:-0.15px;right:1554.0px;">519,001,192</div><div class="t" style="top:345.1px;font-size:14px;color:#262626;letter-spacing:-0.15px;right:1453.5px;">(15,891,830)</div><div class="t" style="top:345.1px;font-size:14px;color:#262626;letter-spacing:-0.15px;right:1355.4px;">497,419,343</div><div class="t" style="top:345.1px;font-size:14px;color:#262626;letter-spacing:-0.15px;right:1256.6px;">499,126,501</div><div class="t" style="top:345.1px;font-size:14px;color:#262626;letter-spacing:-0.15px;right:1145.0px;">4.03%</div><div class="t" style="top:345.1px;font-size:14px;color:#262626;letter-spacing:-0.15px;right:989.0px;">370</div><div class="t" style="top:345.1px;font-size:14px;color:#262626;letter-spacing:-0.15px;right:864.0px;">2,791</div><div class="t" style="top:345.1px;font-size:14px;color:#262626;letter-spacing:-0.15px;right:737.0px;">47.55</div><div class="t" style="top:345.1px;font-size:14px;color:#262626;letter-spacing:-0.15px;right:676.4px;">4.43</div><div class="t" style="top:345.1px;font-size:14px;color:#262626;letter-spacing:-0.15px;right:605.0px;">97.57</div><div class="t" style="top:345.1px;font-size:14px;color:#262626;letter-spacing:-0.15px;right:512.6px;">96.89</div><div class="t" style="top:345.1px;font-size:14px;color:#262626;letter-spacing:-0.15px;right:434.3px;">308</div><div class="t" style="top:345.1px;font-size:14px;color:#262626;letter-spacing:-0.15px;right:283.4px;">28</div><div class="t" style="top:345.1px;font-size:14px;color:#262626;letter-spacing:-0.15px;right:132.0px;">490,819,121</div><div class="t md" style="top:372.1px;font-size:15.2px;color:#1e1e1e;letter-spacing:-0.25px;right:1672.0px;">SRCLO21</div><div class="t" style="top:373.1px;font-size:14px;color:#262626;letter-spacing:-0.15px;right:1554.0px;">507,676,960</div><div class="t" style="top:373.1px;font-size:14px;color:#262626;letter-spacing:-0.15px;right:1453.5px;">(7,214,946)</div><div class="t" style="top:373.1px;font-size:14px;color:#262626;letter-spacing:-0.15px;right:1355.4px;">494,569,768</div><div class="t" style="top:373.1px;font-size:14px;color:#262626;letter-spacing:-0.15px;right:1256.6px;">496,310,095</div><div class="t" style="top:373.1px;font-size:14px;color:#262626;letter-spacing:-0.15px;right:1145.0px;">4.06%</div><div class="t" style="top:373.1px;font-size:14px;color:#262626;letter-spacing:-0.15px;right:989.0px;">372</div><div class="t" style="top:373.1px;font-size:14px;color:#262626;letter-spacing:-0.15px;right:864.0px;">2,799</div><div class="t" style="top:373.1px;font-size:14px;color:#262626;letter-spacing:-0.15px;right:737.0px;">47.45</div><div class="t" style="top:373.1px;font-size:14px;color:#262626;letter-spacing:-0.15px;right:676.4px;">4.59</div><div class="t" style="top:373.1px;font-size:14px;color:#262626;letter-spacing:-0.15px;right:605.0px;">97.60</div><div class="t" style="top:373.1px;font-size:14px;color:#262626;letter-spacing:-0.15px;right:512.6px;">96.79</div><div class="t" style="top:373.1px;font-size:14px;color:#262626;letter-spacing:-0.15px;right:434.3px;">289</div><div class="t" style="top:373.1px;font-size:14px;color:#262626;letter-spacing:-0.15px;right:283.4px;">28</div><div class="t" style="top:373.1px;font-size:14px;color:#262626;letter-spacing:-0.15px;right:132.0px;">487,655,746</div><div class="t md" style="top:400.1px;font-size:15.2px;color:#1e1e1e;letter-spacing:-0.25px;right:1672.0px;">SRCLO22</div><div class="t" style="top:401.1px;font-size:14px;color:#262626;letter-spacing:-0.15px;right:1554.0px;">406,302,000</div><div class="t" style="top:401.1px;font-size:14px;color:#262626;letter-spacing:-0.15px;right:1453.5px;">(5,352,639)</div><div class="t" style="top:401.1px;font-size:14px;color:#262626;letter-spacing:-0.15px;right:1355.4px;">400,947,306</div><div class="t" style="top:401.1px;font-size:14px;color:#262626;letter-spacing:-0.15px;right:1256.6px;">400,947,306</div><div class="t" style="top:401.1px;font-size:14px;color:#262626;letter-spacing:-0.15px;right:1145.0px;">0.99%</div><div class="t" style="top:401.1px;font-size:14px;color:#262626;letter-spacing:-0.15px;right:989.0px;">366</div><div class="t" style="top:401.1px;font-size:14px;color:#262626;letter-spacing:-0.15px;right:864.0px;">2,659</div><div class="t" style="top:401.1px;font-size:14px;color:#262626;letter-spacing:-0.15px;right:737.0px;">47.42</div><div class="t" style="top:401.1px;font-size:14px;color:#262626;letter-spacing:-0.15px;right:676.4px;">4.65</div><div class="t" style="top:401.1px;font-size:14px;color:#262626;letter-spacing:-0.15px;right:605.0px;">97.60</div><div class="t" style="top:401.1px;font-size:14px;color:#262626;letter-spacing:-0.15px;right:512.6px;">98.93</div><div class="t" style="top:401.1px;font-size:14px;color:#262626;letter-spacing:-0.15px;right:434.3px;">241</div><div class="t" style="top:401.1px;font-size:14px;color:#262626;letter-spacing:-0.15px;right:283.4px;">26</div><div class="t" style="top:401.1px;font-size:14px;color:#262626;letter-spacing:-0.15px;right:132.0px;">398,875,772</div><div class="t md" style="top:428.1px;font-size:15.2px;color:#1e1e1e;letter-spacing:-0.25px;right:1672.0px;">SRCLO23</div><div class="t" style="top:429.1px;font-size:14px;color:#262626;letter-spacing:-0.15px;right:1554.0px;">402,169,667</div><div class="t" style="top:429.1px;font-size:14px;color:#262626;letter-spacing:-0.15px;right:1453.5px;">(1,957,518)</div><div class="t" style="top:429.1px;font-size:14px;color:#262626;letter-spacing:-0.15px;right:1355.4px;">158,315,630</div><div class="t" style="top:429.1px;font-size:14px;color:#262626;letter-spacing:-0.15px;right:1256.6px;">158,315,630</div><div class="t" style="top:429.1px;font-size:14px;color:#262626;letter-spacing:-0.15px;right:1145.0px;">2.48%</div><div class="t" style="top:429.1px;font-size:14px;color:#262626;letter-spacing:-0.15px;right:989.0px;">367</div><div class="t" style="top:429.1px;font-size:14px;color:#262626;letter-spacing:-0.15px;right:864.0px;">2,865</div><div class="t" style="top:429.1px;font-size:14px;color:#262626;letter-spacing:-0.15px;right:737.0px;">46.87</div><div class="t" style="top:429.1px;font-size:14px;color:#262626;letter-spacing:-0.15px;right:676.4px;">3.60</div><div class="t" style="top:429.1px;font-size:14px;color:#262626;letter-spacing:-0.15px;right:605.0px;">98.00</div><div class="t" style="top:429.1px;font-size:14px;color:#262626;letter-spacing:-0.15px;right:512.6px;">98.21</div><div class="t" style="top:429.1px;font-size:14px;color:#262626;letter-spacing:-0.15px;right:434.3px;">239</div><div class="t" style="top:429.1px;font-size:14px;color:#262626;letter-spacing:-0.15px;right:283.4px;">26</div><div class="t" style="top:429.1px;font-size:14px;color:#262626;letter-spacing:-0.15px;right:132.0px;">395,494,965</div></div><div class="r" style="left:2206px;top:235px;width:7px;height:460px;background:#bdbdbd;border-radius:3.5px;"></div><div class="r" style="left:256px;top:722px;width:1974px;height:18px;background:#f7f8fa;"></div><svg class="ic" style="left:1206px;top:727px" width="74" height="10" viewBox="0 0 74 10"><path d="M2 8 L8 2 L14 8 Z" fill="#0d47a1"/><rect x="29" y="2.2" width="16" height="1.7" fill="#555"/><rect x="29" y="6.2" width="16" height="1.7" fill="#555"/><path d="M60 2 L72 2 L66 8 Z" fill="#0d47a1"/></svg><div class="t" style="top:753.9px;font-size:11px;color:#757575;letter-spacing:-0.1px;left:256.0px;">Grid display</div><div class="t" style="top:772.1px;font-size:14px;color:#222;letter-spacing:-0.2px;left:256.0px;">Current holdings</div><div class="r" style="left:256px;top:793px;width:180px;height:1px;background:#8a8a8a;"></div><svg class="ic" style="left:421px;top:776px" width="12" height="7" viewBox="0 0 12 7"><path d="M1 1h10L6 6z" fill="#666"/></svg><div class="r" style="left:444.5px;top:767px;width:142px;height:30px;border:1px solid #dcdcdc;border-radius:4px;background:#fff"></div><div class="r" style="left:519px;top:767px;width:69px;height:32px;border-radius:0 4px 4px 0;background:#0d47a1"></div><div class="t md" style="top:776.3px;font-size:14px;color:#1e1e1e;letter-spacing:-0.6px;left:457.0px;">ISSUER</div><div class="t md" style="top:776.3px;font-size:14px;color:#fff;letter-spacing:-0.5px;left:531.5px;">ASSET</div><div class="t" style="top:772.1px;font-size:14px;color:#8a8a8a;letter-spacing:-0.1px;left:601.0px;">Issuer / Asset</div><div class="r" style="left:601px;top:793px;width:180px;height:1px;background:#8a8a8a;"></div><div class="r" style="left:789px;top:761px;width:109px;height:33.5px;border:1px solid #dcdcdc;border-radius:4px;background:#fff;"></div><div class="t md" style="top:772.1px;font-size:14px;color:#1e1e1e;letter-spacing:-0.95px;left:805.5px;">FILTERS</div><svg class="ic" style="left:863px;top:771px" width="18" height="18" viewBox="0 0 18 18"><path d="M1 1.3 H17 L11.1 9.2 V16.2 C11.1 16.9 10.4 17.3 9 17.3 C7.6 17.3 7 16.9 7 16.2 V9.2 Z" fill="#222"/></svg><div class="t md" style="top:772.1px;font-size:14px;color:#1e1e1e;letter-spacing:-0.75px;left:924.0px;">CLEAR FILTERS</div><div class="r" style="left:2117.5px;top:754px;width:94.5px;height:34px;border:1px solid #dcdcdc;border-radius:4px;background:#fff;"></div><svg class="ic" style="left:2135px;top:762px" width="21" height="20" viewBox="0 0 21 20"><path d="M2.9 14.6 C2.9 14.6 2.9 4.2 2.9 4.2 C2.9 3 3.6 2.3 4.8 2.3 H13.6 C14.4 2.3 14.9 2.8 15.1 3.6" stroke="#0d47a1" stroke-width="2" fill="none"/><rect x="5.7" y="5.1" width="13.8" height="13.8" rx="2.4" fill="#0d47a1"/><g fill="#fff"><rect x="7.4" y="7.1" width="10.3" height="1.9" rx="0.6"/><rect x="7.4" y="11" width="2.2" height="2"/><rect x="11.3" y="11" width="2.2" height="2"/><rect x="15.5" y="11" width="2.2" height="2"/><rect x="7.4" y="14.9" width="2.2" height="2"/><rect x="11.3" y="14.9" width="2.2" height="2"/><rect x="15.5" y="14.9" width="2.2" height="2"/></g></svg><div class="t md" style="top:765.1px;font-size:14px;color:#1448a3;letter-spacing:-0.8px;left:2164.0px;">BASE</div><div class="r" style="left:256px;top:804px;width:1954px;height:3px;background:#ececec;"></div><div class="r" style="left:256px;top:804px;width:3px;height:688px;background:#ececec;"></div><div class="r" style="left:2207px;top:804px;width:3px;height:688px;background:#ececec;"></div><div class="r" style="left:857px;top:841px;width:1328px;height:1px;background:#e3e3e3;"></div><div class="r" style="left:259px;top:875px;width:1926px;height:1px;background:#e3e3e3;"></div><div class="r" style="left:259px;top:909px;width:1926px;height:1px;background:#e3e3e3;"></div><div class="r" style="left:527px;top:807px;width:1px;height:102px;background:#e3e3e3;"></div><div class="r" style="left:857px;top:807px;width:1px;height:685px;background:#e3e3e3;"></div><div class="r" style="left:994px;top:807px;width:1px;height:102px;background:#e3e3e3;"></div><div class="r" style="left:1158px;top:807px;width:1px;height:102px;background:#e3e3e3;"></div><div class="r" style="left:1279px;top:807px;width:1px;height:102px;background:#e3e3e3;"></div><div class="r" style="left:1405px;top:807px;width:1px;height:102px;background:#e3e3e3;"></div><div class="r" style="left:1511px;top:807px;width:1px;height:102px;background:#e3e3e3;"></div><div class="r" style="left:1666px;top:807px;width:1px;height:102px;background:#e3e3e3;"></div><div class="r" style="left:1816px;top:807px;width:1px;height:102px;background:#e3e3e3;"></div><div class="r" style="left:1945px;top:842px;width:1px;height:67px;background:#e3e3e3;"></div><div class="r" style="left:2064px;top:842px;width:1px;height:67px;background:#e3e3e3;"></div><div class="t b" style="top:835.3px;font-size:12px;font-weight:700;color:#424242;letter-spacing:-0.4px;left:274.5px;">Issuer</div><div class="t b" style="top:835.3px;font-size:12px;font-weight:700;color:#424242;letter-spacing:-0.4px;left:544.0px;">Asset</div><div class="r" style="left:274px;top:903px;width:207px;height:2px;background:#e4e4e4;"></div><svg class="ic" style="left:497.5px;top:887px" width="15" height="12" viewBox="0 0 15 12"><rect x="0.5" y="1" width="14" height="1.6" fill="#555"/><rect x="3" y="5.2" width="9" height="1.6" fill="#555"/><rect x="5.8" y="9.4" width="3.4" height="1.6" fill="#555"/></svg><div class="r" style="left:544px;top:903px;width:265px;height:2px;background:#e4e4e4;"></div><svg class="ic" style="left:826px;top:887px" width="15" height="12" viewBox="0 0 15 12"><rect x="0.5" y="1" width="14" height="1.6" fill="#555"/><rect x="3" y="5.2" width="9" height="1.6" fill="#555"/><rect x="5.8" y="9.4" width="3.4" height="1.6" fill="#555"/></svg><div class="t b" style="top:818.0px;font-size:12px;font-weight:700;color:#424242;letter-spacing:-0.4px;left:873.5px;">Actual</div><svg class="ic" style="left:917.5px;top:820px" width="7" height="9" viewBox="0 0 7 9"><path d="M1.2 1 L5.2 4.5 L1.2 8" stroke="#555" stroke-width="1.4" fill="none"/></svg><div class="t b" style="top:818.0px;font-size:12px;font-weight:700;color:#424242;letter-spacing:-0.4px;left:1010.0px;">Par (Fund Group)</div><svg class="ic" style="left:1112px;top:820px" width="7" height="9" viewBox="0 0 7 9"><path d="M1.2 1 L5.2 4.5 L1.2 8" stroke="#555" stroke-width="1.4" fill="none"/></svg><div class="t b" style="top:818.0px;font-size:12px;font-weight:700;color:#424242;letter-spacing:-0.4px;left:1174.0px;">Mkt Val</div><svg class="ic" style="left:1223px;top:820px" width="7" height="9" viewBox="0 0 7 9"><path d="M1.2 1 L5.2 4.5 L1.2 8" stroke="#555" stroke-width="1.4" fill="none"/></svg><div class="t b" style="top:818.0px;font-size:12px;font-weight:700;color:#424242;letter-spacing:-0.4px;left:1295.0px;">Asset ID</div><svg class="ic" style="left:1348px;top:820px" width="7" height="9" viewBox="0 0 7 9"><path d="M1.2 1 L5.2 4.5 L1.2 8" stroke="#555" stroke-width="1.4" fill="none"/></svg><div class="t b" style="top:818.0px;font-size:12px;font-weight:700;color:#424242;letter-spacing:-0.4px;left:1421.0px;">Price</div><svg class="ic" style="left:1456.5px;top:820px" width="7" height="9" viewBox="0 0 7 9"><path d="M1.2 1 L5.2 4.5 L1.2 8" stroke="#555" stroke-width="1.4" fill="none"/></svg><div class="t b" style="top:818.0px;font-size:12px;font-weight:700;color:#424242;letter-spacing:-0.4px;left:1527.0px;">Price Lookback</div><svg class="ic" style="left:1618.5px;top:820px" width="7" height="9" viewBox="0 0 7 9"><path d="M1.2 1 L5.2 4.5 L1.2 8" stroke="#555" stroke-width="1.4" fill="none"/></svg><div class="t b" style="top:818.0px;font-size:12px;font-weight:700;color:#424242;letter-spacing:-0.4px;left:1682.5px;">Price Changes</div><svg class="ic" style="left:1769.5px;top:820px" width="7" height="9" viewBox="0 0 7 9"><path d="M1.2 1 L5.2 4.5 L1.2 8" stroke="#555" stroke-width="1.4" fill="none"/></svg><div class="t b" style="top:818.0px;font-size:12px;font-weight:700;color:#424242;letter-spacing:-0.4px;left:1832.5px;">Asset Attributes</div><svg class="ic" style="left:1928px;top:820px" width="7" height="9" viewBox="0 0 7 9"><path d="M1.2 1 L5.2 4.5 L1.2 8" stroke="#555" stroke-width="1.4" fill="none"/></svg><div class="t b" style="top:853.0px;font-size:12px;font-weight:700;color:#424242;letter-spacing:-0.4px;right:1260.4px;">Net Quantity</div><div class="t b" style="top:853.0px;font-size:12px;font-weight:700;color:#424242;letter-spacing:-0.4px;right:1096.5px;">Total</div><div class="t b" style="top:853.0px;font-size:12px;font-weight:700;color:#424242;letter-spacing:-0.4px;right:975.8px;">Bid</div><div class="t b" style="top:853.0px;font-size:12px;font-weight:700;color:#424242;letter-spacing:-0.4px;left:1295.3px;">Primary</div><div class="t b" style="top:853.0px;font-size:12px;font-weight:700;color:#424242;letter-spacing:-0.4px;right:743.0px;">Bid Px</div><div class="t b" style="top:853.0px;font-size:12px;font-weight:700;color:#424242;letter-spacing:-0.4px;right:588.5px;">1D</div><div class="t b" style="top:853.0px;font-size:12px;font-weight:700;color:#424242;letter-spacing:-0.4px;right:438.0px;">1D</div><div class="t b" style="top:853.0px;font-size:12px;font-weight:700;color:#424242;letter-spacing:-0.4px;right:309.2px;">Spread</div><div class="t b" style="top:853.0px;font-size:12px;font-weight:700;color:#424242;letter-spacing:-0.4px;right:190.5px;">Floor</div><div class="t b" style="top:853.0px;font-size:12px;font-weight:700;color:#424242;letter-spacing:-0.4px;right:55.5px;">Avg Life</div><div class="r" style="left:1295px;top:903px;width:63px;height:2px;background:#e4e4e4;"></div><svg class="ic" style="left:1374px;top:887px" width="15" height="12" viewBox="0 0 15 12"><rect x="0.5" y="1" width="14" height="1.6" fill="#555"/><rect x="3" y="5.2" width="9" height="1.6" fill="#555"/><rect x="5.8" y="9.4" width="3.4" height="1.6" fill="#555"/></svg><div class="r" style="left:1421px;top:903px;width:43px;height:2px;background:#e4e4e4;"></div><svg class="ic" style="left:1480.5px;top:887px" width="15" height="12" viewBox="0 0 15 12"><rect x="0.5" y="1" width="14" height="1.6" fill="#555"/><rect x="3" y="5.2" width="9" height="1.6" fill="#555"/><rect x="5.8" y="9.4" width="3.4" height="1.6" fill="#555"/></svg><div class="r" style="left:1527px;top:903px;width:92px;height:2px;background:#e4e4e4;"></div><svg class="ic" style="left:1635.5px;top:887px" width="15" height="12" viewBox="0 0 15 12"><rect x="0.5" y="1" width="14" height="1.6" fill="#555"/><rect x="3" y="5.2" width="9" height="1.6" fill="#555"/><rect x="5.8" y="9.4" width="3.4" height="1.6" fill="#555"/></svg><div class="r" style="left:1682.5px;top:903px;width:86.5px;height:2px;background:#e4e4e4;"></div><svg class="ic" style="left:1785.5px;top:887px" width="15" height="12" viewBox="0 0 15 12"><rect x="0.5" y="1" width="14" height="1.6" fill="#555"/><rect x="3" y="5.2" width="9" height="1.6" fill="#555"/><rect x="5.8" y="9.4" width="3.4" height="1.6" fill="#555"/></svg><div class="r" style="left:1832.5px;top:903px;width:65.0px;height:2px;background:#e4e4e4;"></div><svg class="ic" style="left:1914.5px;top:887px" width="15" height="12" viewBox="0 0 15 12"><rect x="0.5" y="1" width="14" height="1.6" fill="#555"/><rect x="3" y="5.2" width="9" height="1.6" fill="#555"/><rect x="5.8" y="9.4" width="3.4" height="1.6" fill="#555"/></svg><div class="r" style="left:1961px;top:903px;width:56px;height:2px;background:#e4e4e4;"></div><svg class="ic" style="left:2033.5px;top:887px" width="15" height="12" viewBox="0 0 15 12"><rect x="0.5" y="1" width="14" height="1.6" fill="#555"/><rect x="3" y="5.2" width="9" height="1.6" fill="#555"/><rect x="5.8" y="9.4" width="3.4" height="1.6" fill="#555"/></svg><div class="r" style="left:2080px;top:903px;width:72px;height:2px;background:#e4e4e4;"></div><svg class="ic" style="left:2168.5px;top:887px" width="15" height="12" viewBox="0 0 15 12"><rect x="0.5" y="1" width="14" height="1.6" fill="#555"/><rect x="3" y="5.2" width="9" height="1.6" fill="#555"/><rect x="5.8" y="9.4" width="3.4" height="1.6" fill="#555"/></svg><div class="clip" style="left:259px;top:910px;width:1914px;height:582px"><div class="r" style="left:0;top:20px;width:1913px;height:1px;background:#e2e2e2"></div><svg class="ic" style="left:20px;top:2.2px" width="8" height="10" viewBox="0 0 8 10"><path d="M1.5 1 L6 5 L1.5 9" stroke="#666" stroke-width="1.3" fill="none"/></svg><div class="t" style="top:-0.1px;font-size:13.4px;color:#222;letter-spacing:-0.28px;left:48.0px;width:205px;overflow:hidden;">Acrisure LLC</div><div class="t" style="top:-0.1px;font-size:13.4px;color:#222;letter-spacing:-0.42px;left:285.0px;">ACRISURE LLC 02/15/2027 L+350</div><div class="t" style="top:-0.1px;font-size:13.4px;color:#222;letter-spacing:-0.3px;right:1193.7px;">9,749,611</div><div class="t" style="top:-0.1px;font-size:13.4px;color:#222;letter-spacing:-0.3px;right:1033.6px;">9,749,611</div><div class="t" style="top:-0.1px;font-size:13.4px;color:#222;letter-spacing:-0.3px;right:912.7px;">9,704,373</div><div class="t" style="top:-0.1px;font-size:13.4px;color:#333;letter-spacing:-0.18px;left:1040.4px;">LX185414</div><div class="t m2" style="top:-0.1px;font-size:13.4px;color:#222;letter-spacing:-0.2px;right:676.5px;">99.536</div><div class="t" style="top:-0.1px;font-size:13.4px;color:#222;letter-spacing:-0.3px;right:525.6px;">99.804</div><div class="t" style="top:-0.1px;font-size:13.4px;color:#222;letter-spacing:-0.18px;right:375.5px;">0.02%</div><div class="t" style="top:-0.1px;font-size:13.4px;color:#222;letter-spacing:-0.3px;right:246.2px;">350.00</div><div class="t" style="top:-0.1px;font-size:13.4px;color:#222;letter-spacing:-0.3px;right:127.2px;">0.00</div><div class="t" style="top:-0.1px;font-size:13.4px;color:#222;letter-spacing:-0.4px;left:1903.8px;">1.</div><div class="r" style="left:0;top:50px;width:1913px;height:1px;background:#e2e2e2"></div><svg class="ic" style="left:20px;top:32.2px" width="8" height="10" viewBox="0 0 8 10"><path d="M1.5 1 L6 5 L1.5 9" stroke="#666" stroke-width="1.3" fill="none"/></svg><div class="t" style="top:29.9px;font-size:13.4px;color:#222;letter-spacing:-0.28px;left:48.0px;width:205px;overflow:hidden;">Acrisure LLC</div><div class="t" style="top:29.9px;font-size:13.4px;color:#222;letter-spacing:-0.42px;left:285.0px;">ACRISURE LLC TLB 02/15/2027 L+425</div><svg class="ic" style="left:617px;top:24.0px" width="18" height="22" viewBox="0 0 18 22"><path d="M12.4 1.6 L1.4 11.2 L10.5 13.2 L5.6 20.1 L16.3 10.6 L7.5 9 Z" fill="#388e3c" stroke="#388e3c" stroke-width="1.1" stroke-linejoin="round"/></svg><div class="t" style="top:29.9px;font-size:13.4px;color:#222;letter-spacing:-0.3px;right:1193.7px;">22,366,346</div><div class="t" style="top:29.9px;font-size:13.4px;color:#222;letter-spacing:-0.3px;right:1033.6px;">22,366,346</div><div class="t" style="top:29.9px;font-size:13.4px;color:#222;letter-spacing:-0.3px;right:912.7px;">22,347,782</div><div class="t" style="top:29.9px;font-size:13.4px;color:#333;letter-spacing:-0.18px;left:1040.4px;">LX200355</div><div class="t m2" style="top:29.9px;font-size:13.4px;color:#222;letter-spacing:-0.2px;right:676.5px;">99.917</div><div class="t" style="top:29.9px;font-size:13.4px;color:#222;letter-spacing:-0.3px;right:525.6px;">100.250</div><div class="t" style="top:29.9px;font-size:13.4px;color:#222;letter-spacing:-0.18px;right:375.5px;">0.00%</div><div class="t" style="top:29.9px;font-size:13.4px;color:#222;letter-spacing:-0.3px;right:246.2px;">425.00</div><div class="t" style="top:29.9px;font-size:13.4px;color:#222;letter-spacing:-0.3px;right:127.2px;">50.00</div><div class="t" style="top:29.9px;font-size:13.4px;color:#222;letter-spacing:-0.4px;left:1903.8px;">1.</div><div class="r" style="left:0;top:80px;width:1913px;height:1px;background:#e2e2e2"></div><svg class="ic" style="left:20px;top:62.2px" width="8" height="10" viewBox="0 0 8 10"><path d="M1.5 1 L6 5 L1.5 9" stroke="#666" stroke-width="1.3" fill="none"/></svg><div class="t" style="top:59.9px;font-size:13.4px;color:#222;letter-spacing:-0.28px;left:48.0px;width:205px;overflow:hidden;">Acrisure LLC</div><div class="t" style="top:59.9px;font-size:13.4px;color:#222;letter-spacing:-0.42px;left:285.0px;">ACRISURE LLC TLB5 11/06/2030 S+450</div><svg class="ic" style="left:617px;top:54.0px" width="18" height="22" viewBox="0 0 18 22"><path d="M12.4 1.6 L1.4 11.2 L10.5 13.2 L5.6 20.1 L16.3 10.6 L7.5 9 Z" fill="#388e3c" stroke="#388e3c" stroke-width="1.1" stroke-linejoin="round"/></svg><div class="t" style="top:59.9px;font-size:13.4px;color:#222;letter-spacing:-0.3px;right:1193.7px;">3,800,000</div><div class="t" style="top:59.9px;font-size:13.4px;color:#222;letter-spacing:-0.3px;right:1033.6px;">3,800,000</div><div class="t" style="top:59.9px;font-size:13.4px;color:#222;letter-spacing:-0.3px;right:912.7px;">3,798,404</div><div class="t" style="top:59.9px;font-size:13.4px;color:#333;letter-spacing:-0.18px;left:1040.4px;">LX218555</div><div class="t m2" style="top:59.9px;font-size:13.4px;color:#222;letter-spacing:-0.2px;right:676.5px;">99.958</div><div class="t" style="top:59.9px;font-size:13.4px;color:#222;letter-spacing:-0.3px;right:525.6px;">100.250</div><div class="t" style="top:59.9px;font-size:13.4px;color:#222;letter-spacing:-0.18px;right:375.5px;">0.00%</div><div class="t" style="top:59.9px;font-size:13.4px;color:#222;letter-spacing:-0.3px;right:246.2px;">450.00</div><div class="t" style="top:59.9px;font-size:13.4px;color:#222;letter-spacing:-0.3px;right:127.2px;">0.00</div><div class="t" style="top:59.9px;font-size:13.4px;color:#222;letter-spacing:-0.4px;left:1903.8px;">5.</div><div class="r" style="left:0;top:110px;width:1913px;height:1px;background:#e2e2e2"></div><svg class="ic" style="left:20px;top:92.2px" width="8" height="10" viewBox="0 0 8 10"><path d="M1.5 1 L6 5 L1.5 9" stroke="#666" stroke-width="1.3" fill="none"/></svg><div class="t" style="top:89.9px;font-size:13.4px;color:#222;letter-spacing:-0.28px;left:48.0px;width:205px;overflow:hidden;">Action Holdings</div><div class="t" style="top:89.9px;font-size:13.4px;color:#222;letter-spacing:-0.42px;left:285.0px;">PEER HOLDING III TL 10/28/2030 S+325</div><div class="t" style="top:89.9px;font-size:13.4px;color:#222;letter-spacing:-0.3px;right:1193.7px;">5,557,000</div><div class="t" style="top:89.9px;font-size:13.4px;color:#222;letter-spacing:-0.3px;right:1033.6px;">5,557,000</div><div class="t" style="top:89.9px;font-size:13.4px;color:#222;letter-spacing:-0.3px;right:912.7px;">5,563,946</div><div class="t" style="top:89.9px;font-size:13.4px;color:#333;letter-spacing:-0.18px;left:1040.4px;">LX218416</div><div class="t m2" style="top:89.9px;font-size:13.4px;color:#222;letter-spacing:-0.2px;right:676.5px;">100.125</div><div class="t" style="top:89.9px;font-size:13.4px;color:#222;letter-spacing:-0.3px;right:525.6px;">100.354</div><div class="t" style="top:89.9px;font-size:13.4px;color:#222;letter-spacing:-0.18px;right:375.5px;">0.00%</div><div class="t" style="top:89.9px;font-size:13.4px;color:#222;letter-spacing:-0.3px;right:246.2px;">325.00</div><div class="t" style="top:89.9px;font-size:13.4px;color:#222;letter-spacing:-0.3px;right:127.2px;">0.00</div><div class="t" style="top:89.9px;font-size:13.4px;color:#222;letter-spacing:-0.4px;left:1903.8px;">5.</div><div class="r" style="left:0;top:140px;width:1913px;height:1px;background:#e2e2e2"></div><svg class="ic" style="left:20px;top:122.2px" width="8" height="10" viewBox="0 0 8 10"><path d="M1.5 1 L6 5 L1.5 9" stroke="#666" stroke-width="1.3" fill="none"/></svg><div class="t" style="top:119.9px;font-size:13.4px;color:#222;letter-spacing:-0.28px;left:48.0px;width:205px;overflow:hidden;">ADT Security</div><div class="t" style="top:119.9px;font-size:13.4px;color:#222;letter-spacing:-0.42px;left:285.0px;">PRIME SECURITY TLB 10/13/2030 S+250</div><div class="t" style="top:119.9px;font-size:13.4px;color:#222;letter-spacing:-0.3px;right:1193.7px;">6,497,000</div><div class="t" style="top:119.9px;font-size:13.4px;color:#222;letter-spacing:-0.3px;right:1033.6px;">6,497,000</div><div class="t" style="top:119.9px;font-size:13.4px;color:#222;letter-spacing:-0.3px;right:912.7px;">6,510,514</div><div class="t" style="top:119.9px;font-size:13.4px;color:#333;letter-spacing:-0.18px;left:1040.4px;">LX217717</div><div class="t m2" style="top:119.9px;font-size:13.4px;color:#222;letter-spacing:-0.2px;right:676.5px;">100.208</div><div class="t" style="top:119.9px;font-size:13.4px;color:#222;letter-spacing:-0.3px;right:525.6px;">100.175</div><div class="t" style="top:119.9px;font-size:13.4px;color:#222;letter-spacing:-0.18px;right:375.5px;">0.03%</div><div class="t" style="top:119.9px;font-size:13.4px;color:#222;letter-spacing:-0.3px;right:246.2px;">250.00</div><div class="t" style="top:119.9px;font-size:13.4px;color:#222;letter-spacing:-0.3px;right:127.2px;">0.00</div><div class="t" style="top:119.9px;font-size:13.4px;color:#222;letter-spacing:-0.4px;left:1903.8px;">5.</div><div class="r" style="left:0;top:170px;width:1913px;height:1px;background:#e2e2e2"></div><svg class="ic" style="left:20px;top:152.2px" width="8" height="10" viewBox="0 0 8 10"><path d="M1.5 1 L6 5 L1.5 9" stroke="#666" stroke-width="1.3" fill="none"/></svg><div class="t" style="top:149.9px;font-size:13.4px;color:#222;letter-spacing:-0.28px;left:48.0px;width:205px;overflow:hidden;">Advantage Sales</div><div class="t" style="top:149.9px;font-size:13.4px;color:#222;letter-spacing:-0.42px;left:285.0px;">ADVANTAGE SALES TLB 10/28/2027 S+450</div><div class="t" style="top:149.9px;font-size:13.4px;color:#222;letter-spacing:-0.3px;right:1193.7px;">6,496,825</div><div class="t" style="top:149.9px;font-size:13.4px;color:#222;letter-spacing:-0.3px;right:1033.6px;">6,496,825</div><div class="t" style="top:149.9px;font-size:13.4px;color:#222;letter-spacing:-0.3px;right:912.7px;">6,435,949</div><div class="t" style="top:149.9px;font-size:13.4px;color:#333;letter-spacing:-0.18px;left:1040.4px;">LX199465</div><div class="t m2" style="top:149.9px;font-size:13.4px;color:#222;letter-spacing:-0.2px;right:676.5px;">99.063</div><div class="t" style="top:149.9px;font-size:13.4px;color:#222;letter-spacing:-0.3px;right:525.6px;">99.313</div><div class="t" style="top:149.9px;font-size:13.4px;color:#222;letter-spacing:-0.18px;right:375.5px;">0.02%</div><div class="t" style="top:149.9px;font-size:13.4px;color:#222;letter-spacing:-0.3px;right:246.2px;">450.00</div><div class="t" style="top:149.9px;font-size:13.4px;color:#222;letter-spacing:-0.3px;right:127.2px;">75.00</div><div class="t" style="top:149.9px;font-size:13.4px;color:#222;letter-spacing:-0.4px;left:1903.8px;">2.</div><div class="r" style="left:0;top:200px;width:1913px;height:1px;background:#e2e2e2"></div><svg class="ic" style="left:20px;top:182.2px" width="8" height="10" viewBox="0 0 8 10"><path d="M1.5 1 L6 5 L1.5 9" stroke="#666" stroke-width="1.3" fill="none"/></svg><div class="t" style="top:179.9px;font-size:13.4px;color:#222;letter-spacing:-0.28px;left:48.0px;width:205px;overflow:hidden;">Advantage Sales</div><div class="t" style="top:179.9px;font-size:13.4px;color:#222;letter-spacing:-0.42px;left:285.0px;">ADVSAL 6 1/2 11/15/28</div><div class="t" style="top:179.9px;font-size:13.4px;color:#222;letter-spacing:-0.3px;right:1193.7px;">1,000</div><div class="t" style="top:179.9px;font-size:13.4px;color:#222;letter-spacing:-0.3px;right:1033.6px;">1,000,000</div><div class="t" style="top:179.9px;font-size:13.4px;color:#222;letter-spacing:-0.3px;right:912.7px;">925,890</div><div class="t" style="top:179.9px;font-size:13.4px;color:#333;letter-spacing:-0.18px;left:1040.4px;">00775PAA5</div><div class="t m2" style="top:179.9px;font-size:13.4px;color:#222;letter-spacing:-0.2px;right:676.5px;">92.589</div><div class="t" style="top:179.9px;font-size:13.4px;color:#222;letter-spacing:-0.3px;right:525.6px;">92.670</div><div class="t" style="top:179.9px;font-size:13.4px;color:#d93b3b;letter-spacing:-0.18px;right:375.5px;">(0.07%)</div><div class="t" style="top:179.9px;font-size:13.4px;color:#222;letter-spacing:-0.3px;right:246.2px;">650.00</div><div class="t" style="top:179.9px;font-size:13.4px;color:#222;letter-spacing:-0.3px;right:127.2px;">*</div><div class="t" style="top:179.9px;font-size:13.4px;color:#222;letter-spacing:-0.4px;left:1903.8px;">3.</div><div class="r" style="left:0;top:230px;width:1913px;height:1px;background:#e2e2e2"></div><svg class="ic" style="left:20px;top:212.2px" width="8" height="10" viewBox="0 0 8 10"><path d="M1.5 1 L6 5 L1.5 9" stroke="#666" stroke-width="1.3" fill="none"/></svg><div class="t" style="top:209.9px;font-size:13.4px;color:#222;letter-spacing:-0.28px;left:48.0px;width:205px;overflow:hidden;">Advisor Group Holdings, Inc</div><div class="t" style="top:209.9px;font-size:13.4px;color:#222;letter-spacing:-0.42px;left:285.0px;">ADVISOR GROUP HO TL 08/17/2028 S+450</div><div class="t" style="top:209.9px;font-size:13.4px;color:#222;letter-spacing:-0.3px;right:1193.7px;">34,519,000</div><div class="t" style="top:209.9px;font-size:13.4px;color:#222;letter-spacing:-0.3px;right:1033.6px;">34,519,000</div><div class="t" style="top:209.9px;font-size:13.4px;color:#222;letter-spacing:-0.3px;right:912.7px;">34,569,398</div><div class="t" style="top:209.9px;font-size:13.4px;color:#333;letter-spacing:-0.18px;left:1040.4px;">LX215574</div><div class="t m2" style="top:209.9px;font-size:13.4px;color:#222;letter-spacing:-0.2px;right:676.5px;">100.146</div><div class="t" style="top:209.9px;font-size:13.4px;color:#222;letter-spacing:-0.3px;right:525.6px;">100.344</div><div class="t" style="top:209.9px;font-size:13.4px;color:#222;letter-spacing:-0.18px;right:375.5px;">0.02%</div><div class="t" style="top:209.9px;font-size:13.4px;color:#222;letter-spacing:-0.3px;right:246.2px;">450.00</div><div class="t" style="top:209.9px;font-size:13.4px;color:#222;letter-spacing:-0.3px;right:127.2px;">0.00</div><div class="t" style="top:209.9px;font-size:13.4px;color:#222;letter-spacing:-0.4px;left:1903.8px;">3.</div><div class="r" style="left:0;top:260px;width:1913px;height:1px;background:#e2e2e2"></div><svg class="ic" style="left:20px;top:242.2px" width="8" height="10" viewBox="0 0 8 10"><path d="M1.5 1 L6 5 L1.5 9" stroke="#666" stroke-width="1.3" fill="none"/></svg><div class="t" style="top:239.9px;font-size:13.4px;color:#222;letter-spacing:-0.28px;left:48.0px;width:205px;overflow:hidden;">Albany Molecular Research, Inc.</div><div class="t" style="top:239.9px;font-size:13.4px;color:#222;letter-spacing:-0.42px;left:285.0px;">ALBANY MOLECULAR TLB 08/30/2026 S+375</div><div class="t" style="top:239.9px;font-size:13.4px;color:#222;letter-spacing:-0.3px;right:1193.7px;">8,654,727</div><div class="t" style="top:239.9px;font-size:13.4px;color:#222;letter-spacing:-0.3px;right:1033.6px;">8,654,727</div><div class="t" style="top:239.9px;font-size:13.4px;color:#222;letter-spacing:-0.3px;right:912.7px;">7,691,888</div><div class="t" style="top:239.9px;font-size:13.4px;color:#333;letter-spacing:-0.18px;left:1040.4px;">LX196585</div><div class="t m2" style="top:239.9px;font-size:13.4px;color:#222;letter-spacing:-0.2px;right:676.5px;">88.875</div><div class="t" style="top:239.9px;font-size:13.4px;color:#222;letter-spacing:-0.3px;right:525.6px;">88.063</div><div class="t" style="top:239.9px;font-size:13.4px;color:#222;letter-spacing:-0.18px;right:375.5px;">0.92%</div><div class="t" style="top:239.9px;font-size:13.4px;color:#222;letter-spacing:-0.3px;right:246.2px;">375.00</div><div class="t" style="top:239.9px;font-size:13.4px;color:#222;letter-spacing:-0.3px;right:127.2px;">75.00</div><div class="t" style="top:239.9px;font-size:13.4px;color:#222;letter-spacing:-0.4px;left:1903.8px;">1.</div><div class="r" style="left:0;top:290px;width:1913px;height:1px;background:#e2e2e2"></div><svg class="ic" style="left:20px;top:272.2px" width="8" height="10" viewBox="0 0 8 10"><path d="M1.5 1 L6 5 L1.5 9" stroke="#666" stroke-width="1.3" fill="none"/></svg><div class="t" style="top:269.9px;font-size:13.4px;color:#222;letter-spacing:-0.28px;left:48.0px;width:205px;overflow:hidden;">AlixPartners, LLP</div><div class="t" style="top:269.9px;font-size:13.4px;color:#222;letter-spacing:-0.42px;left:285.0px;">ALIXPARTNERS LLP TLB 01/27/2028 S+275</div><div class="t" style="top:269.9px;font-size:13.4px;color:#222;letter-spacing:-0.3px;right:1193.7px;">11,453,407</div><div class="t" style="top:269.9px;font-size:13.4px;color:#222;letter-spacing:-0.3px;right:1033.6px;">11,453,407</div><div class="t" style="top:269.9px;font-size:13.4px;color:#222;letter-spacing:-0.3px;right:912.7px;">11,475,627</div><div class="t" style="top:269.9px;font-size:13.4px;color:#333;letter-spacing:-0.18px;left:1040.4px;">LX192164</div><div class="t m2" style="top:269.9px;font-size:13.4px;color:#222;letter-spacing:-0.2px;right:676.5px;">100.194</div><div class="t" style="top:269.9px;font-size:13.4px;color:#222;letter-spacing:-0.3px;right:525.6px;">100.194</div><div class="t" style="top:269.9px;font-size:13.4px;color:#222;letter-spacing:-0.18px;right:375.5px;">0.00%</div><div class="t" style="top:269.9px;font-size:13.4px;color:#222;letter-spacing:-0.3px;right:246.2px;">275.00</div><div class="t" style="top:269.9px;font-size:13.4px;color:#222;letter-spacing:-0.3px;right:127.2px;">50.00</div><div class="t" style="top:269.9px;font-size:13.4px;color:#222;letter-spacing:-0.4px;left:1903.8px;">2.</div><div class="r" style="left:0;top:320px;width:1913px;height:1px;background:#e2e2e2"></div><svg class="ic" style="left:20px;top:302.2px" width="8" height="10" viewBox="0 0 8 10"><path d="M1.5 1 L6 5 L1.5 9" stroke="#666" stroke-width="1.3" fill="none"/></svg><div class="t" style="top:299.9px;font-size:13.4px;color:#222;letter-spacing:-0.28px;left:48.0px;width:205px;overflow:hidden;">Alliant Ins Services Inc.</div><div class="t" style="top:299.9px;font-size:13.4px;color:#222;letter-spacing:-0.42px;left:285.0px;">ALIANT 6 3/4 04/15/28</div><div class="t" style="top:299.9px;font-size:13.4px;color:#222;letter-spacing:-0.3px;right:1193.7px;">575</div><div class="t" style="top:299.9px;font-size:13.4px;color:#222;letter-spacing:-0.3px;right:1033.6px;">575,000</div><div class="t" style="top:299.9px;font-size:13.4px;color:#222;letter-spacing:-0.3px;right:912.7px;">583,228</div><div class="t" style="top:299.9px;font-size:13.4px;color:#333;letter-spacing:-0.18px;left:1040.4px;">01883LAE3</div><div class="t m2" style="top:299.9px;font-size:13.4px;color:#222;letter-spacing:-0.2px;right:676.5px;">101.431</div><div class="t" style="top:299.9px;font-size:13.4px;color:#222;letter-spacing:-0.3px;right:525.6px;">101.505</div><div class="t" style="top:299.9px;font-size:13.4px;color:#222;letter-spacing:-0.18px;right:375.5px;">0.51%</div><div class="t" style="top:299.9px;font-size:13.4px;color:#222;letter-spacing:-0.3px;right:246.2px;">675.00</div><div class="t" style="top:299.9px;font-size:13.4px;color:#222;letter-spacing:-0.3px;right:127.2px;">*</div><div class="t" style="top:299.9px;font-size:13.4px;color:#222;letter-spacing:-0.4px;left:1903.8px;">2.</div><div class="r" style="left:0;top:350px;width:1913px;height:1px;background:#e2e2e2"></div><svg class="ic" style="left:20px;top:332.2px" width="8" height="10" viewBox="0 0 8 10"><path d="M1.5 1 L6 5 L1.5 9" stroke="#666" stroke-width="1.3" fill="none"/></svg><div class="t" style="top:329.9px;font-size:13.4px;color:#222;letter-spacing:-0.28px;left:48.0px;width:205px;overflow:hidden;">Alliant Ins Services Inc.</div><div class="t" style="top:329.9px;font-size:13.4px;color:#222;letter-spacing:-0.42px;left:285.0px;">ALLIANT HOLDINGS TLB6 11/06/2030 S+350</div><div class="t" style="top:329.9px;font-size:13.4px;color:#222;letter-spacing:-0.3px;right:1193.7px;">16,102,227</div><div class="t" style="top:329.9px;font-size:13.4px;color:#222;letter-spacing:-0.3px;right:1033.6px;">16,102,227</div><div class="t" style="top:329.9px;font-size:13.4px;color:#222;letter-spacing:-0.3px;right:912.7px;">16,152,627</div><div class="t" style="top:329.9px;font-size:13.4px;color:#333;letter-spacing:-0.18px;left:1040.4px;">LX221361</div><div class="t m2" style="top:329.9px;font-size:13.4px;color:#222;letter-spacing:-0.2px;right:676.5px;">100.313</div><div class="t" style="top:329.9px;font-size:13.4px;color:#222;letter-spacing:-0.3px;right:525.6px;">100.419</div><div class="t" style="top:329.9px;font-size:13.4px;color:#222;letter-spacing:-0.18px;right:375.5px;">0.06%</div><div class="t" style="top:329.9px;font-size:13.4px;color:#222;letter-spacing:-0.3px;right:246.2px;">350.00</div><div class="t" style="top:329.9px;font-size:13.4px;color:#222;letter-spacing:-0.3px;right:127.2px;">50.00</div><div class="t" style="top:329.9px;font-size:13.4px;color:#222;letter-spacing:-0.4px;left:1903.8px;">5.</div><div class="r" style="left:0;top:380px;width:1913px;height:1px;background:#e2e2e2"></div><svg class="ic" style="left:20px;top:362.2px" width="8" height="10" viewBox="0 0 8 10"><path d="M1.5 1 L6 5 L1.5 9" stroke="#666" stroke-width="1.3" fill="none"/></svg><div class="t" style="top:359.9px;font-size:13.4px;color:#222;letter-spacing:-0.28px;left:48.0px;width:205px;overflow:hidden;">Allied Universal</div><div class="t" style="top:359.9px;font-size:13.4px;color:#222;letter-spacing:-0.42px;left:285.0px;">ALLIED UNIVERSAL TLB 05/12/2028 S+375</div><div class="t" style="top:359.9px;font-size:13.4px;color:#222;letter-spacing:-0.3px;right:1193.7px;">27,669,539</div><div class="t" style="top:359.9px;font-size:13.4px;color:#222;letter-spacing:-0.3px;right:1033.6px;">27,669,539</div><div class="t" style="top:359.9px;font-size:13.4px;color:#222;letter-spacing:-0.3px;right:912.7px;">27,501,031</div><div class="t" style="top:359.9px;font-size:13.4px;color:#333;letter-spacing:-0.18px;left:1040.4px;">LX194227</div><div class="t m2" style="top:359.9px;font-size:13.4px;color:#222;letter-spacing:-0.2px;right:676.5px;">99.391</div><div class="t" style="top:359.9px;font-size:13.4px;color:#222;letter-spacing:-0.3px;right:525.6px;">99.521</div><div class="t" style="top:359.9px;font-size:13.4px;color:#222;letter-spacing:-0.18px;right:375.5px;">0.15%</div><div class="t" style="top:359.9px;font-size:13.4px;color:#222;letter-spacing:-0.3px;right:246.2px;">375.00</div><div class="t" style="top:359.9px;font-size:13.4px;color:#222;letter-spacing:-0.3px;right:127.2px;">50.00</div><div class="t" style="top:359.9px;font-size:13.4px;color:#222;letter-spacing:-0.4px;left:1903.8px;">2.</div><div class="r" style="left:0;top:410px;width:1913px;height:1px;background:#e2e2e2"></div><svg class="ic" style="left:20px;top:392.2px" width="8" height="10" viewBox="0 0 8 10"><path d="M1.5 1 L6 5 L1.5 9" stroke="#666" stroke-width="1.3" fill="none"/></svg><div class="t" style="top:389.9px;font-size:13.4px;color:#222;letter-spacing:-0.28px;left:48.0px;width:205px;overflow:hidden;">Allied Universal</div><div class="t" style="top:389.9px;font-size:13.4px;color:#222;letter-spacing:-0.42px;left:285.0px;">ALLIED UNIVERSAL TLB 05/12/2028 S+475</div><div class="t" style="top:389.9px;font-size:13.4px;color:#222;letter-spacing:-0.3px;right:1193.7px;">18,972,000</div><div class="t" style="top:389.9px;font-size:13.4px;color:#222;letter-spacing:-0.3px;right:1033.6px;">18,972,000</div><div class="t" style="top:389.9px;font-size:13.4px;color:#222;letter-spacing:-0.3px;right:912.7px;">18,936,522</div><div class="t" style="top:389.9px;font-size:13.4px;color:#333;letter-spacing:-0.18px;left:1040.4px;">LX212474</div><div class="t m2" style="top:389.9px;font-size:13.4px;color:#222;letter-spacing:-0.2px;right:676.5px;">99.813</div><div class="t" style="top:389.9px;font-size:13.4px;color:#222;letter-spacing:-0.3px;right:525.6px;">100.156</div><div class="t" style="top:389.9px;font-size:13.4px;color:#222;letter-spacing:-0.18px;right:375.5px;">0.03%</div><div class="t" style="top:389.9px;font-size:13.4px;color:#222;letter-spacing:-0.3px;right:246.2px;">475.00</div><div class="t" style="top:389.9px;font-size:13.4px;color:#222;letter-spacing:-0.3px;right:127.2px;">50.00</div><div class="t" style="top:389.9px;font-size:13.4px;color:#222;letter-spacing:-0.4px;left:1903.8px;">2.</div><div class="r" style="left:0;top:440px;width:1913px;height:1px;background:#e2e2e2"></div><svg class="ic" style="left:20px;top:422.2px" width="8" height="10" viewBox="0 0 8 10"><path d="M1.5 1 L6 5 L1.5 9" stroke="#666" stroke-width="1.3" fill="none"/></svg><div class="t" style="top:419.9px;font-size:13.4px;color:#222;letter-spacing:-0.28px;left:48.0px;width:205px;overflow:hidden;">Allied Universal</div><div class="t" style="top:419.9px;font-size:13.4px;color:#222;letter-spacing:-0.42px;left:285.0px;">UNSEAM 6 5/8 07/15/26</div><div class="t" style="top:419.9px;font-size:13.4px;color:#222;letter-spacing:-0.3px;right:1193.7px;">3,000</div><div class="t" style="top:419.9px;font-size:13.4px;color:#222;letter-spacing:-0.3px;right:1033.6px;">3,000,000</div><div class="t" style="top:419.9px;font-size:13.4px;color:#222;letter-spacing:-0.3px;right:912.7px;">2,973,199</div><div class="t" style="top:419.9px;font-size:13.4px;color:#333;letter-spacing:-0.18px;left:1040.4px;">019576AA5</div><div class="t m2" style="top:419.9px;font-size:13.4px;color:#222;letter-spacing:-0.2px;right:676.5px;">99.107</div><div class="t" style="top:419.9px;font-size:13.4px;color:#222;letter-spacing:-0.3px;right:525.6px;">99.193</div><div class="t" style="top:419.9px;font-size:13.4px;color:#222;letter-spacing:-0.18px;right:375.5px;">0.15%</div><div class="t" style="top:419.9px;font-size:13.4px;color:#222;letter-spacing:-0.3px;right:246.2px;">662.50</div><div class="t" style="top:419.9px;font-size:13.4px;color:#222;letter-spacing:-0.3px;right:127.2px;">*</div><div class="t" style="top:419.9px;font-size:13.4px;color:#222;letter-spacing:-0.4px;left:1903.8px;">0.</div><div class="r" style="left:0;top:470px;width:1913px;height:1px;background:#e2e2e2"></div><svg class="ic" style="left:20px;top:452.2px" width="8" height="10" viewBox="0 0 8 10"><path d="M1.5 1 L6 5 L1.5 9" stroke="#666" stroke-width="1.3" fill="none"/></svg><div class="t" style="top:449.9px;font-size:13.4px;color:#222;letter-spacing:-0.28px;left:48.0px;width:205px;overflow:hidden;">Altice NV</div><div class="t" style="top:449.9px;font-size:13.4px;color:#222;letter-spacing:-0.42px;left:285.0px;">ALTICE FRANCE 01/31/2026 S+368.75</div><div class="t" style="top:449.9px;font-size:13.4px;color:#222;letter-spacing:-0.3px;right:1193.7px;">5,263,777</div><div class="t" style="top:449.9px;font-size:13.4px;color:#222;letter-spacing:-0.3px;right:1033.6px;">5,263,777</div><div class="t" style="top:449.9px;font-size:13.4px;color:#222;letter-spacing:-0.3px;right:912.7px;">4,929,527</div><div class="t" style="top:449.9px;font-size:13.4px;color:#333;letter-spacing:-0.18px;left:1040.4px;">LX169002</div><div class="t m2" style="top:449.9px;font-size:13.4px;color:#222;letter-spacing:-0.2px;right:676.5px;">93.650</div><div class="t" style="top:449.9px;font-size:13.4px;color:#222;letter-spacing:-0.3px;right:525.6px;">93.667</div><div class="t" style="top:449.9px;font-size:13.4px;color:#d93b3b;letter-spacing:-0.18px;right:375.5px;">(0.02%)</div><div class="t" style="top:449.9px;font-size:13.4px;color:#222;letter-spacing:-0.3px;right:246.2px;">368.75</div><div class="t" style="top:449.9px;font-size:13.4px;color:#222;letter-spacing:-0.3px;right:127.2px;">0.00</div><div class="t" style="top:449.9px;font-size:13.4px;color:#222;letter-spacing:-0.4px;left:1903.8px;">0.</div><div class="r" style="left:0;top:500px;width:1913px;height:1px;background:#e2e2e2"></div><svg class="ic" style="left:20px;top:482.2px" width="8" height="10" viewBox="0 0 8 10"><path d="M1.5 1 L6 5 L1.5 9" stroke="#666" stroke-width="1.3" fill="none"/></svg><div class="t" style="top:479.9px;font-size:13.4px;color:#222;letter-spacing:-0.28px;left:48.0px;width:205px;overflow:hidden;">Altice NV</div><div class="t" style="top:479.9px;font-size:13.4px;color:#222;letter-spacing:-0.42px;left:285.0px;">ALTICE FRANCE 07/31/2025 S+275</div><div class="t" style="top:479.9px;font-size:13.4px;color:#222;letter-spacing:-0.3px;right:1193.7px;">10,978,571</div><div class="t" style="top:479.9px;font-size:13.4px;color:#222;letter-spacing:-0.3px;right:1033.6px;">10,978,571</div><div class="t" style="top:479.9px;font-size:13.4px;color:#222;letter-spacing:-0.3px;right:912.7px;">10,662,937</div><div class="t" style="top:479.9px;font-size:13.4px;color:#333;letter-spacing:-0.18px;left:1040.4px;">LX162009</div><div class="t m2" style="top:479.9px;font-size:13.4px;color:#222;letter-spacing:-0.2px;right:676.5px;">97.125</div><div class="t" style="top:479.9px;font-size:13.4px;color:#222;letter-spacing:-0.3px;right:525.6px;">97.143</div><div class="t" style="top:479.9px;font-size:13.4px;color:#d93b3b;letter-spacing:-0.18px;right:375.5px;">(0.02%)</div><div class="t" style="top:479.9px;font-size:13.4px;color:#222;letter-spacing:-0.3px;right:246.2px;">275.00</div><div class="t" style="top:479.9px;font-size:13.4px;color:#222;letter-spacing:-0.3px;right:127.2px;">0.00</div><div class="t" style="top:479.9px;font-size:13.4px;color:#d93b3b;letter-spacing:-0.9px;left:1902.5px;">(0.0</div><div class="r" style="left:0;top:530px;width:1913px;height:1px;background:#e2e2e2"></div><svg class="ic" style="left:20px;top:512.2px" width="8" height="10" viewBox="0 0 8 10"><path d="M1.5 1 L6 5 L1.5 9" stroke="#666" stroke-width="1.3" fill="none"/></svg><div class="t" style="top:509.9px;font-size:13.4px;color:#222;letter-spacing:-0.28px;left:48.0px;width:205px;overflow:hidden;">Altice NV</div><div class="t" style="top:509.9px;font-size:13.4px;color:#222;letter-spacing:-0.42px;left:285.0px;">ALTICE FRANCE TLB13 08/14/2026 L+400</div><div class="t" style="top:509.9px;font-size:13.4px;color:#222;letter-spacing:-0.3px;right:1193.7px;">18,588,075</div><div class="t" style="top:509.9px;font-size:13.4px;color:#222;letter-spacing:-0.3px;right:1033.6px;">18,588,075</div><div class="t" style="top:509.9px;font-size:13.4px;color:#222;letter-spacing:-0.3px;right:912.7px;">17,273,712</div><div class="t" style="top:509.9px;font-size:13.4px;color:#333;letter-spacing:-0.18px;left:1040.4px;">LX174852</div><div class="t m2" style="top:509.9px;font-size:13.4px;color:#222;letter-spacing:-0.2px;right:676.5px;">92.929</div><div class="t" style="top:509.9px;font-size:13.4px;color:#222;letter-spacing:-0.3px;right:525.6px;">93.450</div><div class="t" style="top:509.9px;font-size:13.4px;color:#222;letter-spacing:-0.18px;right:375.5px;">0.04%</div><div class="t" style="top:509.9px;font-size:13.4px;color:#222;letter-spacing:-0.3px;right:246.2px;">400.00</div><div class="t" style="top:509.9px;font-size:13.4px;color:#222;letter-spacing:-0.3px;right:127.2px;">0.00</div><div class="t" style="top:509.9px;font-size:13.4px;color:#222;letter-spacing:-0.4px;left:1903.8px;">1.</div><div class="r" style="left:0;top:560px;width:1913px;height:1px;background:#e2e2e2"></div><svg class="ic" style="left:20px;top:542.2px" width="8" height="10" viewBox="0 0 8 10"><path d="M1.5 1 L6 5 L1.5 9" stroke="#666" stroke-width="1.3" fill="none"/></svg><div class="t" style="top:539.9px;font-size:13.4px;color:#222;letter-spacing:-0.28px;left:48.0px;width:205px;overflow:hidden;">Altice USA</div><div class="t" style="top:539.9px;font-size:13.4px;color:#222;letter-spacing:-0.42px;left:285.0px;">CSC HOLDINGS LLC 07/17/2025 L+225</div><div class="t" style="top:539.9px;font-size:13.4px;color:#222;letter-spacing:-0.3px;right:1193.7px;">4,400,000</div><div class="t" style="top:539.9px;font-size:13.4px;color:#222;letter-spacing:-0.3px;right:1033.6px;">4,400,000</div><div class="t" style="top:539.9px;font-size:13.4px;color:#222;letter-spacing:-0.3px;right:912.7px;">4,321,944</div><div class="t" style="top:539.9px;font-size:13.4px;color:#333;letter-spacing:-0.18px;left:1040.4px;">LX161695</div><div class="t m2" style="top:539.9px;font-size:13.4px;color:#222;letter-spacing:-0.2px;right:676.5px;">98.226</div><div class="t" style="top:539.9px;font-size:13.4px;color:#222;letter-spacing:-0.3px;right:525.6px;">98.250</div><div class="t" style="top:539.9px;font-size:13.4px;color:#d93b3b;letter-spacing:-0.18px;right:375.5px;">(0.02%)</div><div class="t" style="top:539.9px;font-size:13.4px;color:#222;letter-spacing:-0.3px;right:246.2px;">225.00</div><div class="t" style="top:539.9px;font-size:13.4px;color:#222;letter-spacing:-0.3px;right:127.2px;">0.00</div><div class="t" style="top:539.9px;font-size:13.4px;color:#d93b3b;letter-spacing:-0.9px;left:1902.5px;">(0.1</div><div class="r" style="left:0;top:590px;width:1913px;height:1px;background:#e2e2e2"></div><svg class="ic" style="left:20px;top:572.2px" width="8" height="10" viewBox="0 0 8 10"><path d="M1.5 1 L6 5 L1.5 9" stroke="#666" stroke-width="1.3" fill="none"/></svg><div class="t" style="top:569.9px;font-size:13.4px;color:#222;letter-spacing:-0.28px;left:48.0px;width:205px;overflow:hidden;">American Airlines/AAdvantage Loyalty IP Ltd</div><div class="t" style="top:569.9px;font-size:13.4px;color:#222;letter-spacing:-0.42px;left:285.0px;">AADVANTAGE LOY TL 04/20/2028 S+475</div><div class="t" style="top:569.9px;font-size:13.4px;color:#222;letter-spacing:-0.3px;right:1193.7px;">21,883,129</div><div class="t" style="top:569.9px;font-size:13.4px;color:#222;letter-spacing:-0.3px;right:1033.6px;">21,883,129</div><div class="t" style="top:569.9px;font-size:13.4px;color:#222;letter-spacing:-0.3px;right:912.7px;">22,426,268</div><div class="t" style="top:569.9px;font-size:13.4px;color:#333;letter-spacing:-0.18px;left:1040.4px;">LX193380</div><div class="t m2" style="top:569.9px;font-size:13.4px;color:#222;letter-spacing:-0.2px;right:676.5px;">102.482</div><div class="t" style="top:569.9px;font-size:13.4px;color:#222;letter-spacing:-0.3px;right:525.6px;">102.656</div><div class="t" style="top:569.9px;font-size:13.4px;color:#222;letter-spacing:-0.18px;right:375.5px;">0.09%</div><div class="t" style="top:569.9px;font-size:13.4px;color:#222;letter-spacing:-0.3px;right:246.2px;">475.00</div><div class="t" style="top:569.9px;font-size:13.4px;color:#222;letter-spacing:-0.3px;right:127.2px;">75.00</div><div class="t" style="top:569.9px;font-size:13.4px;color:#222;letter-spacing:-0.4px;left:1903.8px;">2.</div></div><div class="r" style="left:2176px;top:917px;width:6px;height:88px;background:#c4c4c4;border-radius:3px;"></div><div class="r" style="left:2191px;top:831px;width:10px;height:83px;border:1px solid #2a56b0"></div><svg class="ic" style="left:2191px;top:839.5px" width="12" height="13" viewBox="0 0 12 13"><g fill="#111"><rect x="1" y="0.6" width="2.6" height="2.6"/><rect x="4.9" y="0.6" width="2.6" height="2.6"/><rect x="8.8" y="0.6" width="2.6" height="2.6"/><rect x="1" y="5" width="2.6" height="2.6"/><rect x="4.9" y="5" width="2.6" height="2.6"/><rect x="8.8" y="5" width="2.6" height="2.6"/><rect x="1" y="9.4" width="2.6" height="2.6"/><rect x="4.9" y="9.4" width="2.6" height="2.6"/><rect x="8.8" y="9.4" width="2.6" height="2.6"/></g></svg><div class="t" style="left:2204px;top:857.5px;font-size:13px;color:#222;letter-spacing:0px;transform-origin:0 0;transform:rotate(90deg)">Columns</div><svg class="ic" style="left:2190px;top:939px" width="14" height="11" viewBox="0 0 14 11"><rect x="0.3" y="1" width="13.6" height="1.9" fill="#444"/><rect x="3" y="5" width="8.6" height="1.6" fill="#444"/><rect x="5.8" y="8.9" width="3" height="1.7" fill="#444"/></svg><div class="t" style="left:2204px;top:957px;font-size:13px;color:#222;letter-spacing:0px;transform-origin:0 0;transform:rotate(90deg)">Filters</div><svg class="ic" style="left:2190px;top:1023px" width="14" height="12" viewBox="0 0 14 12"><rect x="0.5" y="0.8" width="13" height="1.7" fill="#444"/><rect x="0.5" y="4.8" width="13" height="1.7" fill="#444"/><rect x="0.5" y="8.8" width="13" height="1.7" fill="#444"/></svg><div class="t" style="left:2204px;top:1041px;font-size:13px;color:#222;letter-spacing:0px;transform-origin:0 0;transform:rotate(90deg)">View Manager</div></div></body></html>
